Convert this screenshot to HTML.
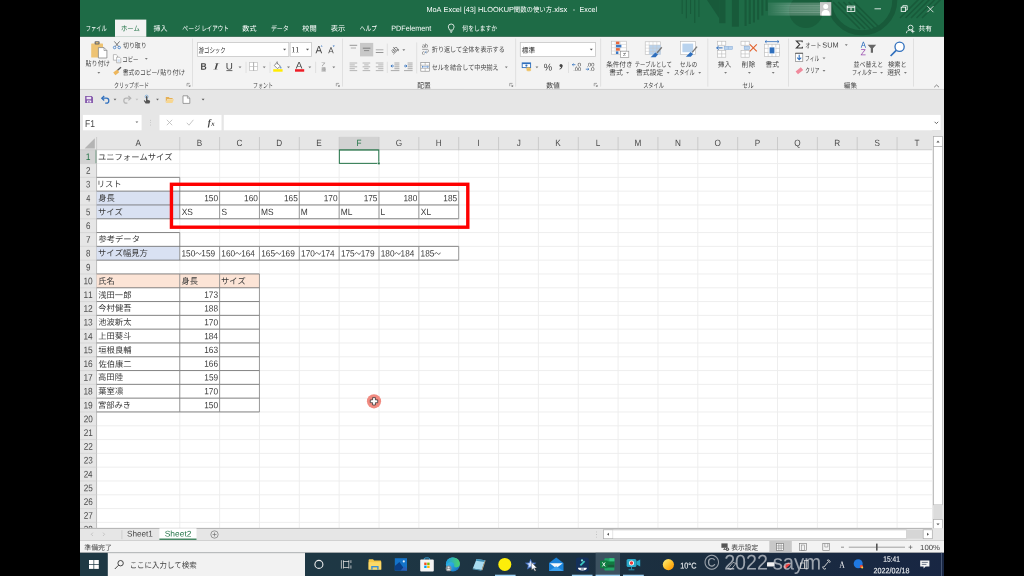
<!DOCTYPE html>
<html lang="ja"><head><meta charset="utf-8"><title>MoA Excel [43] HLOOKUP - Excel</title>
<style>
html,body{margin:0;padding:0;background:#000;}
body{width:1024px;height:576px;overflow:hidden;position:relative;font-family:"Liberation Sans","Noto Sans CJK JP",sans-serif;}
#app{position:absolute;left:0;top:0;width:1024px;height:576px;overflow:hidden;background:#000;}
#fx{position:absolute;left:80px;top:0;width:864px;height:576px;overflow:hidden;}
#fx>div{position:absolute;left:-80px;top:0;width:1024px;height:576px;filter:blur(0.3px);}
#art{position:absolute;left:0;top:0;will-change:transform;}
#art text{font-family:"Liberation Sans","Noto Sans CJK JP",sans-serif;text-rendering:geometricPrecision;font-kerning:none;white-space:pre;}
</style></head>
<body>
<div id="app"><div id="fx"><div>
<svg id="art" width="1024" height="576" viewBox="0 0 1024 576">
<rect x="80" y="0" width="864" height="36.8" fill="#1e6b46"/>
<g fill="#185a3a">
<rect x="681.6" y="0" width="1.1" height="14" fill="#185a3a"/>
<rect x="685.8" y="0" width="1.1" height="18.3" fill="#185a3a"/>
<rect x="690" y="0" width="1.1" height="14" fill="#185a3a"/>
<rect x="694.2" y="0" width="1.1" height="23" fill="#185a3a"/>
<rect x="698.4" y="0" width="1.1" height="17" fill="#185a3a"/>
<path d="M707 0L719.2 0L719.2 18.3Z" fill="#185a3a"/>
<rect x="719.2" y="0" width="6.3" height="23.2" fill="#185a3a"/>
<rect x="731.9" y="0" width="7" height="26.7" fill="#185a3a"/>
<rect x="744.5" y="0" width="2.1" height="26" fill="#185a3a"/>
<rect x="748.7" y="0" width="2.1" height="24" fill="#185a3a"/>
<rect x="752.9" y="0" width="2.1" height="22.5" fill="#185a3a"/>
<rect x="757.1" y="0" width="2.1" height="19.7" fill="#185a3a"/>
<rect x="761.3" y="0" width="2.1" height="15.5" fill="#185a3a"/>
<rect x="765.5" y="0" width="2.1" height="11" fill="#185a3a"/>
</g>
<circle cx="862" cy="0" r="32.8" fill="none" stroke="#185a3a" stroke-width="5"/>
<circle cx="806" cy="11" r="17" fill="#185a3a" opacity="0.75"/>
<g stroke="#185a3a" stroke-width="1.6" fill="none">
<path d="M833 2L860 29"/>
<path d="M838.2 2L865.2 29"/>
<path d="M843.4 2L870.4 29"/>
<path d="M848.6 2L875.6 29"/>
<path d="M853.8 2L880.8 29"/>
<path d="M900 18L920 -2"/>
<path d="M905.5 18L925.5 -2"/>
<path d="M911 18L931 -2"/>
<path d="M916.5 18L936.5 -2"/>
<path d="M922 18L942 -2"/>
</g>
<defs><linearGradient id="nm" x1="0" x2="1"><stop offset="0" stop-color="#fff" stop-opacity="0"/><stop offset="0.45" stop-color="#fff" stop-opacity="0.16"/><stop offset="1" stop-color="#fff" stop-opacity="0.2"/></linearGradient></defs>
<rect x="768" y="2.6" width="52" height="13" fill="#fff" opacity="0.07"/>
<rect x="768" y="2.6" width="52" height="13" fill="url(#nm)"/>
<rect x="770" y="5.2" width="50" height="1.1" fill="url(#nm)"/>
<rect x="770" y="7.4" width="50" height="1.1" fill="url(#nm)"/>
<rect x="770" y="9.6" width="50" height="1.1" fill="url(#nm)"/>
<rect x="770" y="11.8" width="50" height="1.1" fill="url(#nm)"/>
<rect x="820" y="2.1" width="11.3" height="13.5" fill="#c9c9c9"/>
<circle cx="825.7" cy="6.6" r="2.5" fill="#fff"/>
<path d="M821.5 15.6C821.5 11.6 823 10 825.7 10S829.9 11.6 829.9 15.6Z" fill="#fff"/>
<rect x="847.2" y="6.1" width="7.6" height="5.4" fill="none" stroke="#fff" stroke-width="0.8"/>
<path d="M847.2 7.6L854.8 7.6" stroke="#fff" stroke-width="0.8" fill="none"/>
<path d="M851 8.6L851 10.8M849.8 9.6L851 8.5L852.2 9.6" fill="none" stroke="#fff" stroke-width="0.7"/>
<path d="M874.5 8.8L881 8.8" stroke="#fff" stroke-width="0.8" fill="none"/>
<rect x="901.2" y="7.2" width="4.4" height="4.3" fill="none" stroke="#fff" stroke-width="0.8"/>
<path d="M902.8 7.2V5.7H907.2V10H905.6" fill="none" stroke="#fff" stroke-width="0.8"/>
<path d="M927.4 6.2L933.4 12.2M933.4 6.2L927.4 12.2" fill="none" stroke="#fff" stroke-width="0.8"/>
<text x="426.4" y="12.05" font-size="7.4" fill="#fff" textLength="87.59" lengthAdjust="spacingAndGlyphs" transform="rotate(0.05 426.4 12.05)">MoA Excel [43] HLOOKUP</text>
<text x="513.79" y="12.22" font-size="7" fill="#fff" textLength="38.36" lengthAdjust="spacingAndGlyphs">関数の使い方</text>
<text x="552.11" y="12.05" font-size="7.4" fill="#fff" textLength="15.17" lengthAdjust="spacingAndGlyphs" transform="rotate(0.05 552.11 12.05)">.xlsx</text>
<text x="572.87" y="12.05" font-size="7.4" fill="#fff" transform="rotate(0.05 572.87 12.05)">-</text>
<text x="579.61" y="12.05" font-size="7.4" fill="#fff" textLength="17.46" lengthAdjust="spacingAndGlyphs" transform="rotate(0.05 579.61 12.05)">Excel</text>
<rect x="115" y="19.6" width="31.3" height="17.2" fill="#f3f3f3"/>
<text x="85.63" y="30.8" font-size="7.2" fill="#fff" textLength="21.22" lengthAdjust="spacingAndGlyphs">ファイル</text>
<text x="120.89" y="30.8" font-size="7.2" fill="#217346" textLength="18.93" lengthAdjust="spacingAndGlyphs">ホーム</text>
<text x="153.61" y="30.8" font-size="7.2" fill="#fff" textLength="14.02" lengthAdjust="spacingAndGlyphs">挿入</text>
<text x="182.28" y="30.8" font-size="7.2" fill="#fff" textLength="17.96" lengthAdjust="spacingAndGlyphs">ページ</text>
<text x="201.39" y="30.8" font-size="7.2" fill="#fff" textLength="27.36" lengthAdjust="spacingAndGlyphs">レイアウト</text>
<text x="242.36" y="30.8" font-size="7.2" fill="#fff" textLength="14.07" lengthAdjust="spacingAndGlyphs">数式</text>
<text x="270.89" y="30.8" font-size="7.2" fill="#fff" textLength="17.86" lengthAdjust="spacingAndGlyphs">データ</text>
<text x="302.37" y="30.8" font-size="7.2" fill="#fff" textLength="14.44" lengthAdjust="spacingAndGlyphs">校閲</text>
<text x="330.7" y="30.8" font-size="7.2" fill="#fff" textLength="14.53" lengthAdjust="spacingAndGlyphs">表示</text>
<text x="359.84" y="30.8" font-size="7.2" fill="#fff" textLength="17.25" lengthAdjust="spacingAndGlyphs">ヘルプ</text>
<text x="391.31" y="30.65" font-size="7.4" fill="#fff" textLength="39.84" lengthAdjust="spacingAndGlyphs" transform="rotate(0.05 391.31 30.65)">PDFelement</text>
<path d="M451.2 24A2.9 2.9 0 0 1 454.1 26.9C454.1 28.3 453 28.8 452.8 30.1H449.6C449.4 28.8 448.3 28.3 448.3 26.9A2.9 2.9 0 0 1 451.2 24Z" fill="none" stroke="#fff" stroke-width="0.8"/>
<path d="M449.9 31.2L452.5 31.2" stroke="#fff" stroke-width="0.7" fill="none"/>
<path d="M450.4 32.3L452 32.3" stroke="#fff" stroke-width="0.7" fill="none"/>
<text x="462.35" y="30.8" font-size="7.2" fill="#fff" textLength="34.75" lengthAdjust="spacingAndGlyphs">何をしますか</text>
<circle cx="910.6" cy="27.6" r="2.4" fill="none" stroke="#fff" stroke-width="0.8"/>
<path d="M906.4 33.2C906.6 30.6 908.3 30 910.6 30C911.6 30 912.4 30.2 913 30.6" fill="none" stroke="#fff" stroke-width="0.8"/>
<path d="M912.8 29.8V33.2M911.1 31.5H914.5" fill="none" stroke="#fff" stroke-width="0.7"/>
<text x="918.58" y="30.73" font-size="7" fill="#fff" textLength="13.33" lengthAdjust="spacingAndGlyphs">共有</text>
<rect x="80" y="36.8" width="864" height="52.8" fill="#f3f3f3"/>
<path d="M80 89.4L944 89.4" stroke="#d8d8d8" stroke-width="0.8" fill="none"/>
<path d="M192.5 38.6L192.5 86.6" stroke="#dadada" stroke-width="0.8" fill="none"/>
<path d="M342.5 38.6L342.5 86.6" stroke="#dadada" stroke-width="0.8" fill="none"/>
<path d="M515.6 38.6L515.6 86.6" stroke="#dadada" stroke-width="0.8" fill="none"/>
<path d="M600.6 38.6L600.6 86.6" stroke="#dadada" stroke-width="0.8" fill="none"/>
<path d="M707.8 38.6L707.8 86.6" stroke="#dadada" stroke-width="0.8" fill="none"/>
<path d="M788.5 38.6L788.5 86.6" stroke="#dadada" stroke-width="0.8" fill="none"/>
<path d="M913.5 38.6L913.5 86.6" stroke="#dadada" stroke-width="0.8" fill="none"/>
<rect x="91.2" y="43.4" width="11.8" height="14.2" fill="#eec373" rx="0.6"/>
<rect x="94.6" y="41.3" width="5" height="3.3" fill="#6b6b6b" rx="0.8"/>
<rect x="95.8" y="42.2" width="2.6" height="1.2" fill="#eec373"/>
<path d="M98.4 47.6H104L106.9 50.5V58H98.4Z" fill="#fff" stroke="#7a7a7a" stroke-width="0.7"/>
<path d="M104 47.6V50.5H106.9" fill="none" stroke="#7a7a7a" stroke-width="0.6"/>
<text x="85.58" y="66.46" font-size="7.1" fill="#444" textLength="24.14" lengthAdjust="spacingAndGlyphs">貼り付け</text>
<path d="M97.35 71.95L100.25 71.95L98.8 73.65Z" fill="#7a7a7a"/>
<path d="M114.3 41.4L118.6 46.4M119.6 41.4L115.3 46.4" fill="none" stroke="#555" stroke-width="0.8"/>
<circle cx="114.6" cy="47.5" r="1.25" fill="none" stroke="#3b78c4" stroke-width="0.8"/>
<circle cx="119.2" cy="47.5" r="1.25" fill="none" stroke="#3b78c4" stroke-width="0.8"/>
<text x="123.01" y="48.06" font-size="7.1" fill="#444" textLength="23.59" lengthAdjust="spacingAndGlyphs">切り取り</text>
<path d="M113.4 54.6H116.2L117.5 55.9V60.2H113.4Z" fill="#fff" stroke="#8a8a8a" stroke-width="0.55"/>
<path d="M116.6 57.2H119.4L120.8 58.6V62.8H116.6Z" fill="#fff" stroke="#8a8a8a" stroke-width="0.55"/>
<path d="M117.6 60L119.8 60" stroke="#6f9fd8" stroke-width="0.45" fill="none"/>
<path d="M117.6 61.2L119.8 61.2" stroke="#6f9fd8" stroke-width="0.45" fill="none"/>
<text x="122.35" y="61.56" font-size="7.1" fill="#444" textLength="16.11" lengthAdjust="spacingAndGlyphs">コピー</text>
<path d="M144.85 58.05L147.75 58.05L146.3 59.75Z" fill="#7a7a7a"/>
<path d="M113.2 72.4L117.2 69.4L119.2 72.2L115.4 75.2Z" fill="#eeb75c"/>
<path d="M117.6 70.2L121 67.2" fill="none" stroke="#555" stroke-width="1.3"/>
<text x="122.84" y="74.96" font-size="7.1" fill="#444" textLength="34.4" lengthAdjust="spacingAndGlyphs">書式のコピー</text>
<text x="157.2" y="74.85" font-size="7.4" fill="#444" transform="rotate(0.05 157.2 74.85)">/</text>
<text x="160.17" y="74.96" font-size="7.1" fill="#444" textLength="24.86" lengthAdjust="spacingAndGlyphs">貼り付け</text>
<text x="114.11" y="87.86" font-size="7.1" fill="#444" textLength="34.93" lengthAdjust="spacingAndGlyphs">クリップボード</text>
<path d="M187 86.2V83.4H189.8" fill="none" stroke="#777" stroke-width="0.6"/>
<path d="M190.4 84.8L190.4 86.8L188.4 86.8Z" fill="#777"/>
<path d="M188.4 84.8L189.8 86.2" stroke="#777" stroke-width="0.6" fill="none"/>
<rect x="197.6" y="42.6" width="91.2" height="13.8" fill="#fff" stroke="#c6c6c6" stroke-width="0.8"/>
<rect x="290.1" y="42.6" width="21.4" height="13.8" fill="#fff" stroke="#c6c6c6" stroke-width="0.8"/>
<text x="198.56" y="52.57" font-size="7.4" fill="#333" textLength="27.11" lengthAdjust="spacingAndGlyphs">游ゴシック</text>
<path d="M283.1 48.7L286.1 48.7L284.6 50.5Z" fill="#555"/>
<text x="291.29" y="52.32" font-size="8" fill="#333" textLength="8.1" lengthAdjust="spacingAndGlyphs" style="font-family:'Liberation Serif',serif" transform="rotate(0.05 291.29 52.32)">11</text>
<path d="M306 48.7L309 48.7L307.5 50.5Z" fill="#555"/>
<text x="315.38" y="53.15" font-size="10.6" fill="#444" textLength="6.64" lengthAdjust="spacingAndGlyphs" transform="rotate(0.05 315.38 53.15)">A</text>
<path d="M320.6 46.6L322.6 46.6L321.6 45.2Z" fill="#3b78c4"/>
<text x="328.18" y="53.36" font-size="8.6" fill="#444" textLength="5.43" lengthAdjust="spacingAndGlyphs" transform="rotate(0.05 328.18 53.36)">A</text>
<path d="M332.6 45.6L334.8 45.6L333.7 47Z" fill="#3b78c4"/>
<text x="200.43" y="69.7" font-size="9.6" fill="#444" textLength="6.16" lengthAdjust="spacingAndGlyphs" font-weight="bold" transform="rotate(0.05 200.43 69.7)">B</text>
<text x="213.39" y="69.54" font-size="9.6" fill="#444" textLength="5.6" lengthAdjust="spacingAndGlyphs" style="font-family:'Liberation Serif',serif" font-style="italic" transform="rotate(0.05 213.39 69.54)">I</text>
<text x="225.84" y="69.43" font-size="9.4" fill="#444" textLength="7.12" lengthAdjust="spacingAndGlyphs" transform="rotate(0.05 225.84 69.43)">U</text>
<path d="M226.4 70.6L232.4 70.6" stroke="#444" stroke-width="0.8" fill="none"/>
<path d="M238.55 66.55L241.45 66.55L240 68.25Z" fill="#7a7a7a"/>
<path d="M246 61.8L246 73" stroke="#dadada" stroke-width="0.8" fill="none"/>
<rect x="249.6" y="62.4" width="8" height="8.2" fill="#fff" stroke="#c2c2c2" stroke-width="0.7"/>
<path d="M253.6 62.4L253.6 70.6" stroke="#8a8a8a" stroke-width="0.7" fill="none"/>
<path d="M249.6 66.5L257.6 66.5" stroke="#b5b5b5" stroke-width="0.6" fill="none"/>
<path d="M262.75 66.55L265.65 66.55L264.2 68.25Z" fill="#7a7a7a"/>
<path d="M270 61.8L270 73" stroke="#dadada" stroke-width="0.8" fill="none"/>
<path d="M276.6 62.6L280.4 66.2L277.4 68.6L274.4 65.6Z" fill="#fff" stroke="#666" stroke-width="0.7"/>
<path d="M277.2 61.4V64.4" fill="none" stroke="#666" stroke-width="0.7"/>
<path d="M280.6 66.2C281.6 67.4 281.7 68.4 281 68.6C280.2 68.6 280.1 67.4 280.6 66.2Z" fill="#3b78c4"/>
<rect x="273.2" y="69.2" width="9.4" height="2.5" fill="#ffeb00"/>
<path d="M287.05 66.55L289.95 66.55L288.5 68.25Z" fill="#7a7a7a"/>
<text x="295.88" y="68.43" font-size="9.4" fill="#444" textLength="6.64" lengthAdjust="spacingAndGlyphs" transform="rotate(0.05 295.88 68.43)">A</text>
<rect x="295" y="69.2" width="9.2" height="2.5" fill="#ee1c25"/>
<path d="M308.35 66.55L311.25 66.55L309.8 68.25Z" fill="#7a7a7a"/>
<path d="M315.6 61.8L315.6 73" stroke="#dadada" stroke-width="0.8" fill="none"/>
<text x="321.03" y="66.12" font-size="4.6" fill="#666" textLength="4.6" lengthAdjust="spacingAndGlyphs">ア</text>
<text x="321.17" y="71.1" font-size="4.8" fill="#666" textLength="4.8" lengthAdjust="spacingAndGlyphs">亜</text>
<path d="M332.35 66.55L335.25 66.55L333.8 68.25Z" fill="#7a7a7a"/>
<text x="252.98" y="87.86" font-size="7.1" fill="#444" textLength="19.88" lengthAdjust="spacingAndGlyphs">フォント</text>
<path d="M336.3 86.2V83.4H339.1" fill="none" stroke="#777" stroke-width="0.6"/>
<path d="M339.7 84.8L339.7 86.8L337.7 86.8Z" fill="#777"/>
<path d="M337.7 84.8L339.1 86.2" stroke="#777" stroke-width="0.6" fill="none"/>
<rect x="360" y="42.9" width="13.2" height="13.5" fill="#c8c8c8"/>
<path d="M349.6 45.3L357.2 45.3" stroke="#777" stroke-width="0.75" fill="none"/>
<path d="M350.8 48L356 48" stroke="#999" stroke-width="0.75" fill="none"/>
<path d="M362.8 48.2L370.4 48.2" stroke="#666" stroke-width="0.75" fill="none"/>
<path d="M364 50.6L369.2 50.6" stroke="#777" stroke-width="0.75" fill="none"/>
<path d="M375.8 49.8L383.4 49.8" stroke="#999" stroke-width="0.75" fill="none"/>
<path d="M375.8 52.5L383.4 52.5" stroke="#777" stroke-width="0.75" fill="none"/>
<path d="M387.3 43.6L387.3 55.6" stroke="#dadada" stroke-width="0.8" fill="none"/>
<g transform="rotate(-40 394.6 49.6)">
<text x="390.85" y="51.6" font-size="6.4" fill="#555" textLength="7" lengthAdjust="spacingAndGlyphs">ab</text>
</g>
<path d="M393.2 54.4L398.6 49.4M398.6 49.4L396.8 49.6M398.6 49.4L398.4 51.2" fill="none" stroke="#777" stroke-width="0.7"/>
<path d="M402.35 49.35L405.25 49.35L403.8 51.05Z" fill="#7a7a7a"/>
<path d="M416.7 42.4L416.7 73.4" stroke="#dadada" stroke-width="0.8" fill="none"/>
<path d="M349.6 63L357.2 63" stroke="#949494" stroke-width="0.65" fill="none"/>
<path d="M349.6 64.9L354.8 64.9" stroke="#949494" stroke-width="0.65" fill="none"/>
<path d="M349.6 66.8L357.2 66.8" stroke="#949494" stroke-width="0.65" fill="none"/>
<path d="M349.6 68.7L354.8 68.7" stroke="#949494" stroke-width="0.65" fill="none"/>
<path d="M349.6 70.6L357.2 70.6" stroke="#949494" stroke-width="0.65" fill="none"/>
<path d="M362.6 63L370.2 63" stroke="#949494" stroke-width="0.65" fill="none"/>
<path d="M364.2 64.9L368.6 64.9" stroke="#949494" stroke-width="0.65" fill="none"/>
<path d="M362.6 66.8L370.2 66.8" stroke="#949494" stroke-width="0.65" fill="none"/>
<path d="M364.2 68.7L368.6 68.7" stroke="#949494" stroke-width="0.65" fill="none"/>
<path d="M362.6 70.6L370.2 70.6" stroke="#949494" stroke-width="0.65" fill="none"/>
<path d="M375.8 63L383.4 63" stroke="#949494" stroke-width="0.65" fill="none"/>
<path d="M378.2 64.9L383.4 64.9" stroke="#949494" stroke-width="0.65" fill="none"/>
<path d="M375.8 66.8L383.4 66.8" stroke="#949494" stroke-width="0.65" fill="none"/>
<path d="M378.2 68.7L383.4 68.7" stroke="#949494" stroke-width="0.65" fill="none"/>
<path d="M375.8 70.6L383.4 70.6" stroke="#949494" stroke-width="0.65" fill="none"/>
<path d="M387.3 61.8L387.3 73" stroke="#dadada" stroke-width="0.8" fill="none"/>
<path d="M394.4 63L399.4 63" stroke="#8a8a8a" stroke-width="0.7" fill="none"/>
<path d="M394.4 64.9L399.4 64.9" stroke="#8a8a8a" stroke-width="0.7" fill="none"/>
<path d="M394.4 66.8L399.4 66.8" stroke="#8a8a8a" stroke-width="0.7" fill="none"/>
<path d="M394.4 68.7L399.4 68.7" stroke="#8a8a8a" stroke-width="0.7" fill="none"/>
<path d="M390.8 70.6L399.4 70.6" stroke="#8a8a8a" stroke-width="0.7" fill="none"/>
<path d="M393.8 66H391M392.2 64.7L390.9 66L392.2 67.3" fill="none" stroke="#2f6fbd" stroke-width="0.9"/>
<path d="M407.6 63L412.6 63" stroke="#8a8a8a" stroke-width="0.7" fill="none"/>
<path d="M407.6 64.9L412.6 64.9" stroke="#8a8a8a" stroke-width="0.7" fill="none"/>
<path d="M407.6 66.8L412.6 66.8" stroke="#8a8a8a" stroke-width="0.7" fill="none"/>
<path d="M407.6 68.7L412.6 68.7" stroke="#8a8a8a" stroke-width="0.7" fill="none"/>
<path d="M404 70.6L412.6 70.6" stroke="#8a8a8a" stroke-width="0.7" fill="none"/>
<path d="M404 66H406.8M405.6 64.7L406.9 66L405.6 67.3" fill="none" stroke="#2f6fbd" stroke-width="0.9"/>
<text x="421.97" y="47.53" font-size="5.6" fill="#555" textLength="6.06" lengthAdjust="spacingAndGlyphs" transform="rotate(0.05 421.97 47.53)">ab</text>
<path d="M422.2 49.4H427.4C428.8 49.4 428.8 52.2 427.4 52.2H425.6" fill="none" stroke="#777" stroke-width="0.65"/>
<path d="M426.4 51.2L425.3 52.2L426.4 53.2" fill="none" stroke="#2f6fbd" stroke-width="0.7"/>
<text x="421.96" y="54.53" font-size="5.6" fill="#555" transform="rotate(0.05 421.96 54.53)">c</text>
<text x="431.81" y="52.46" font-size="7.1" fill="#444" textLength="72.97" lengthAdjust="spacingAndGlyphs">折り返して全体を表示する</text>
<rect x="420.8" y="62.4" width="8.8" height="8.8" fill="#fff" stroke="#8a8a8a" stroke-width="0.65"/>
<path d="M420.8 65.2L429.6 65.2" stroke="#8a8a8a" stroke-width="0.5" fill="none"/>
<path d="M420.8 68.4L429.6 68.4" stroke="#8a8a8a" stroke-width="0.5" fill="none"/>
<path d="M425.2 62.4L425.2 65.2" stroke="#8a8a8a" stroke-width="0.5" fill="none"/>
<path d="M425.2 68.4L425.2 71.2" stroke="#8a8a8a" stroke-width="0.5" fill="none"/>
<path d="M422 66.8H428.4M423 66L422 66.8L423 67.6M427.4 66L428.4 66.8L427.4 67.6" fill="none" stroke="#2f6fbd" stroke-width="0.6"/>
<text x="431.67" y="69.96" font-size="7.1" fill="#444" textLength="67.04" lengthAdjust="spacingAndGlyphs">セルを結合して中央揃え</text>
<path d="M504.85 66.55L507.75 66.55L506.3 68.25Z" fill="#7a7a7a"/>
<text x="417.32" y="87.86" font-size="7.1" fill="#444" textLength="13.46" lengthAdjust="spacingAndGlyphs">配置</text>
<path d="M509.7 86.2V83.4H512.5" fill="none" stroke="#777" stroke-width="0.6"/>
<path d="M513.1 84.8L513.1 86.8L511.1 86.8Z" fill="#777"/>
<path d="M511.1 84.8L512.5 86.2" stroke="#777" stroke-width="0.6" fill="none"/>
<rect x="520.3" y="42.6" width="75.3" height="13.8" fill="#fff" stroke="#c6c6c6" stroke-width="0.8"/>
<text x="521.79" y="52.57" font-size="7.4" fill="#333" textLength="13.44" lengthAdjust="spacingAndGlyphs">標準</text>
<path d="M589.8 48.7L592.8 48.7L591.3 50.5Z" fill="#555"/>
<rect x="522.2" y="62.9" width="8.4" height="4.7" fill="#fff" stroke="#2f6fbd" stroke-width="0.9"/>
<rect x="522.2" y="62.9" width="8.4" height="1.2" fill="#2f6fbd"/>
<circle cx="526.4" cy="65.6" r="1.1" fill="#2f6fbd"/>
<path d="M526.2 68.4A2.2 1 0 0 0 530.6 68.4A2.2 1 0 0 0 526.2 68.4M526.6 70A2.2 1 0 0 0 531 70A2.2 1 0 0 0 526.6 70" fill="#f5cf7a" stroke="#e0a840" stroke-width="0.4"/>
<path d="M535.45 66.55L538.35 66.55L536.9 68.25Z" fill="#7a7a7a"/>
<text x="543.76" y="70.47" font-size="9.8" fill="#444" textLength="8.37" lengthAdjust="spacingAndGlyphs" transform="rotate(0.05 543.76 70.47)">%</text>
<circle cx="561" cy="65.4" r="1.5" fill="#444"/>
<path d="M562.5 65.2C562.7 67.4 561.6 68.8 559.6 69.6L559.3 69C560.6 68.3 561.2 67.4 561 66.4Z" fill="#444"/>
<path d="M568.5 61.8L568.5 73" stroke="#dadada" stroke-width="0.8" fill="none"/>
<path d="M572.4 64.7H575.4M573.5 63.6L572.3 64.7L573.5 65.8" fill="none" stroke="#2f6fbd" stroke-width="0.8"/>
<text x="575.82" y="66.62" font-size="5.3" fill="#444" textLength="5.33" lengthAdjust="spacingAndGlyphs" transform="rotate(0.05 575.82 66.62)">.0</text>
<text x="573.18" y="71.12" font-size="5.3" fill="#444" textLength="7.95" lengthAdjust="spacingAndGlyphs" transform="rotate(0.05 573.18 71.12)">.00</text>
<text x="586.48" y="66.62" font-size="5.3" fill="#444" textLength="7.95" lengthAdjust="spacingAndGlyphs" transform="rotate(0.05 586.48 66.62)">.00</text>
<path d="M585.8 69.2H588.8M587.7 68.1L588.9 69.2L587.7 70.3" fill="none" stroke="#2f6fbd" stroke-width="0.8"/>
<text x="589.32" y="71.12" font-size="5.3" fill="#444" textLength="5.33" lengthAdjust="spacingAndGlyphs" transform="rotate(0.05 589.32 71.12)">.0</text>
<text x="546.17" y="87.86" font-size="7.1" fill="#444" textLength="13.71" lengthAdjust="spacingAndGlyphs">数値</text>
<path d="M594.2 86.2V83.4H597" fill="none" stroke="#777" stroke-width="0.6"/>
<path d="M597.6 84.8L597.6 86.8L595.6 86.8Z" fill="#777"/>
<path d="M595.6 84.8L597 86.2" stroke="#777" stroke-width="0.6" fill="none"/>
<rect x="611.4" y="41.2" width="15" height="13" fill="#fff" stroke="#b8b8b8" stroke-width="0.6"/>
<path d="M611.4 44.4L626.4 44.4" stroke="#c4c4c4" stroke-width="0.5" fill="none"/>
<path d="M611.4 47.7L626.4 47.7" stroke="#c4c4c4" stroke-width="0.5" fill="none"/>
<path d="M611.4 51L626.4 51" stroke="#c4c4c4" stroke-width="0.5" fill="none"/>
<path d="M615.2 41.2L615.2 54.2" stroke="#c4c4c4" stroke-width="0.5" fill="none"/>
<path d="M620.2 41.2L620.2 54.2" stroke="#c4c4c4" stroke-width="0.5" fill="none"/>
<rect x="616" y="41.6" width="3.4" height="2.6" fill="#e8683c"/>
<rect x="616" y="44.8" width="5.4" height="2.6" fill="#3b78c4"/>
<rect x="616" y="48.1" width="3.8" height="2.6" fill="#e8683c"/>
<rect x="616" y="51.4" width="2.4" height="2.6" fill="#3b78c4"/>
<rect x="620.6" y="51.2" width="8.2" height="6.2" fill="#fff" stroke="#8a8a8a" stroke-width="0.6"/>
<text x="623.03" y="56.16" font-size="5.4" fill="#444" transform="rotate(0.05 623.03 56.16)">≠</text>
<text x="606.14" y="66.86" font-size="7.1" fill="#444" textLength="26.46" lengthAdjust="spacingAndGlyphs">条件付き</text>
<text x="609.23" y="75.16" font-size="7.1" fill="#444" textLength="13.6" lengthAdjust="spacingAndGlyphs">書式</text>
<path d="M626.15 71.95L629.05 71.95L627.6 73.65Z" fill="#7a7a7a"/>
<rect x="645.2" y="41.8" width="15.4" height="12.8" fill="#fff" stroke="#b8b8b8" stroke-width="0.6"/>
<rect x="649.2" y="45" width="11.4" height="9.6" fill="#b9d3ee"/>
<path d="M645.2 45L660.6 45" stroke="#c4c4c4" stroke-width="0.5" fill="none"/>
<path d="M645.2 48.2L660.6 48.2" stroke="#c4c4c4" stroke-width="0.5" fill="none"/>
<path d="M645.2 51.4L660.6 51.4" stroke="#c4c4c4" stroke-width="0.5" fill="none"/>
<path d="M649.2 41.8L649.2 54.6" stroke="#c4c4c4" stroke-width="0.5" fill="none"/>
<path d="M653 41.8L653 54.6" stroke="#c4c4c4" stroke-width="0.5" fill="none"/>
<path d="M656.8 41.8L656.8 54.6" stroke="#c4c4c4" stroke-width="0.5" fill="none"/>
<path d="M657 53L661.8 47.2" fill="none" stroke="#787878" stroke-width="1.4"/>
<path d="M655.4 52.6L658 54.6L655.6 57.2H650.6Z" fill="#2f6fbd"/>
<text x="634.7" y="66.86" font-size="7.1" fill="#444" textLength="37.13" lengthAdjust="spacingAndGlyphs">テーブルとして</text>
<text x="636.03" y="75.16" font-size="7.1" fill="#444" textLength="27.26" lengthAdjust="spacingAndGlyphs">書式設定</text>
<path d="M666.75 71.95L669.65 71.95L668.2 73.65Z" fill="#7a7a7a"/>
<rect x="680.4" y="41.4" width="15" height="13" fill="#fff" stroke="#b8b8b8" stroke-width="0.6"/>
<rect x="682.4" y="43.6" width="10.8" height="8.6" fill="#b9d3ee"/>
<path d="M692.2 52.4L697 46.6" fill="none" stroke="#787878" stroke-width="1.4"/>
<path d="M690.6 52L693.2 54L690.8 56.8H685.8Z" fill="#2f6fbd"/>
<text x="679.85" y="66.86" font-size="7.1" fill="#444" textLength="17.49" lengthAdjust="spacingAndGlyphs">セルの</text>
<text x="674.09" y="75.16" font-size="7.1" fill="#444" textLength="20.56" lengthAdjust="spacingAndGlyphs">スタイル</text>
<path d="M698.25 71.95L701.15 71.95L699.7 73.65Z" fill="#7a7a7a"/>
<text x="643.18" y="87.86" font-size="7.1" fill="#444" textLength="20.77" lengthAdjust="spacingAndGlyphs">スタイル</text>
<rect x="717.6" y="41.2" width="8.2" height="4" fill="#fff" stroke="#b0b0b0" stroke-width="0.55"/>
<path d="M721.7 41.2L721.7 45.2" stroke="#b0b0b0" stroke-width="0.5" fill="none"/>
<rect x="717.6" y="50.6" width="8.2" height="6.6" fill="#fff" stroke="#b0b0b0" stroke-width="0.55"/>
<path d="M721.7 50.6L721.7 57.2" stroke="#b0b0b0" stroke-width="0.5" fill="none"/>
<path d="M717.6 53.9L725.8 53.9" stroke="#b0b0b0" stroke-width="0.5" fill="none"/>
<rect x="724.2" y="46.4" width="8.2" height="3" fill="#b9d3ee" stroke="#7fa6d6" stroke-width="0.5"/>
<path d="M728.3 46.4L728.3 49.4" stroke="#7fa6d6" stroke-width="0.5" fill="none"/>
<path d="M722.6 47.9H716.8M718.6 46.2L716.6 47.9L718.6 49.6" fill="none" stroke="#2f6fbd" stroke-width="1"/>
<text x="717.72" y="66.86" font-size="7.1" fill="#444" textLength="13.4" lengthAdjust="spacingAndGlyphs">挿入</text>
<path d="M724.15 71.95L727.05 71.95L725.6 73.65Z" fill="#7a7a7a"/>
<rect x="741" y="41.2" width="8.2" height="4" fill="#fff" stroke="#b0b0b0" stroke-width="0.55"/>
<path d="M745.1 41.2L745.1 45.2" stroke="#b0b0b0" stroke-width="0.5" fill="none"/>
<rect x="741" y="50.6" width="8.2" height="6.6" fill="#fff" stroke="#b0b0b0" stroke-width="0.55"/>
<path d="M745.1 50.6L745.1 57.2" stroke="#b0b0b0" stroke-width="0.5" fill="none"/>
<path d="M741 53.9L749.2 53.9" stroke="#b0b0b0" stroke-width="0.5" fill="none"/>
<rect x="744.2" y="46.4" width="5.2" height="3" fill="#b9d3ee" stroke="#7fa6d6" stroke-width="0.5"/>
<path d="M749.8 44.4L756.8 51.4M756.8 44.4L749.8 51.4" fill="none" stroke="#e2622e" stroke-width="1.15"/>
<text x="741.6" y="66.86" font-size="7.1" fill="#444" textLength="13.59" lengthAdjust="spacingAndGlyphs">削除</text>
<path d="M747.95 71.95L750.85 71.95L749.4 73.65Z" fill="#7a7a7a"/>
<rect x="764.4" y="44.2" width="15.2" height="12.4" fill="#fff" stroke="#b0b0b0" stroke-width="0.55"/>
<path d="M768.2 44.2L768.2 56.6" stroke="#b0b0b0" stroke-width="0.5" fill="none"/>
<path d="M772 44.2L772 56.6" stroke="#b0b0b0" stroke-width="0.5" fill="none"/>
<path d="M775.8 44.2L775.8 56.6" stroke="#b0b0b0" stroke-width="0.5" fill="none"/>
<path d="M764.4 48.33L779.6 48.33" stroke="#b0b0b0" stroke-width="0.5" fill="none"/>
<path d="M764.4 52.47L779.6 52.47" stroke="#b0b0b0" stroke-width="0.5" fill="none"/>
<rect x="768.6" y="47" width="6.8" height="7" fill="#fff"/>
<rect x="769.6" y="47.4" width="4.8" height="6" fill="#2f6fbd"/>
<path d="M765 41.6H779M766.6 40.4L765 41.6L766.6 42.8M777.4 40.4L779 41.6L777.4 42.8" fill="none" stroke="#2f6fbd" stroke-width="0.8"/>
<text x="765.43" y="66.86" font-size="7.1" fill="#444" textLength="13.6" lengthAdjust="spacingAndGlyphs">書式</text>
<path d="M771.75 71.95L774.65 71.95L773.2 73.65Z" fill="#7a7a7a"/>
<text x="742.26" y="87.86" font-size="7.1" fill="#444" textLength="11.42" lengthAdjust="spacingAndGlyphs">セル</text>
<path d="M802.2 42.3V41H796.4L799.7 44.5L796.4 48H802.4V46.7" fill="none" stroke="#3c3c3c" stroke-width="1.1"/>
<text x="805.35" y="47.76" font-size="7.1" fill="#444" textLength="15.86" lengthAdjust="spacingAndGlyphs">オート</text>
<text x="822.27" y="47.61" font-size="7.3" fill="#444" textLength="16.34" lengthAdjust="spacingAndGlyphs" transform="rotate(0.05 822.27 47.61)">SUM</text>
<path d="M844.85 44.35L847.75 44.35L846.3 46.05Z" fill="#7a7a7a"/>
<rect x="795.6" y="53.6" width="7.2" height="7.8" fill="#fff" stroke="#777" stroke-width="0.6"/>
<path d="M795.4 53.2L803 53.2" stroke="#555" stroke-width="0.9" fill="none"/>
<path d="M799.2 54.8V59.4M797.2 57.6L799.2 59.8L801.2 57.6" fill="none" stroke="#2f6fbd" stroke-width="1.1"/>
<text x="805.12" y="60.96" font-size="7.1" fill="#444" textLength="14.11" lengthAdjust="spacingAndGlyphs">フィル</text>
<path d="M822.55 57.55L825.45 57.55L824 59.25Z" fill="#7a7a7a"/>
<path d="M795.6 71.4L800.8 67.2L803.2 70L798 74.2Z" fill="#f08a9c"/>
<text x="805.34" y="73.46" font-size="7.1" fill="#444" textLength="13.98" lengthAdjust="spacingAndGlyphs">クリア</text>
<path d="M822.55 70.05L825.45 70.05L824 71.75Z" fill="#7a7a7a"/>
<text x="860.78" y="47.76" font-size="8.6" fill="#2f6fbd" textLength="5.23" lengthAdjust="spacingAndGlyphs" transform="rotate(0.05 860.78 47.76)">A</text>
<text x="860.62" y="55.16" font-size="8.6" fill="#9a4fb0" textLength="5.35" lengthAdjust="spacingAndGlyphs" transform="rotate(0.05 860.62 55.16)">Z</text>
<path d="M867.6 44.8L876.2 44.8L873 48.2L873 52.8L870.8 52.8L870.8 48.2Z" fill="#666"/>
<text x="853.54" y="66.86" font-size="7.1" fill="#444" textLength="29.62" lengthAdjust="spacingAndGlyphs">並べ替えと</text>
<text x="851.97" y="75.16" font-size="7.1" fill="#444" textLength="25.26" lengthAdjust="spacingAndGlyphs">フィルター</text>
<path d="M880.15 71.95L883.05 71.95L881.6 73.65Z" fill="#7a7a7a"/>
<circle cx="899.6" cy="46.8" r="4.6" fill="#fff" stroke="#2f6fbd" stroke-width="1.3"/>
<path d="M896.2 50.4L890.6 56" fill="none" stroke="#2f6fbd" stroke-width="1.7"/>
<text x="888.1" y="66.86" font-size="7.1" fill="#444" textLength="18.66" lengthAdjust="spacingAndGlyphs">検索と</text>
<text x="887.17" y="75.16" font-size="7.1" fill="#444" textLength="13.38" lengthAdjust="spacingAndGlyphs">選択</text>
<path d="M903.95 71.95L906.85 71.95L905.4 73.65Z" fill="#7a7a7a"/>
<text x="843.83" y="87.86" font-size="7.1" fill="#444" textLength="13.18" lengthAdjust="spacingAndGlyphs">編集</text>
<path d="M934.2 87.2L936.6 85L939 87.2" fill="none" stroke="#666" stroke-width="0.8"/>
<rect x="80" y="89.6" width="864" height="60.6" fill="#e6e6e6"/>
<path d="M85.2 96H91.6L92.9 97.3V103H85.2Z" fill="#7d4ea6"/>
<rect x="86.5" y="96.8" width="4.7" height="2.5" fill="#ece3f3"/>
<rect x="86.9" y="100.5" width="4.4" height="2" fill="#f6f1fa"/>
<rect x="88.3" y="101.1" width="1.2" height="1.4" fill="#7d4ea6"/>
<path d="M102.4 98.2H106.4C109.6 98.2 109.6 103.2 106.4 103.2H105.2" fill="none" stroke="#2f6fbd" stroke-width="1.3"/>
<path d="M104.2 96L101.8 98.2L104.2 100.4" fill="none" stroke="#2f6fbd" stroke-width="1.3"/>
<path d="M113.6 98.8L116.4 98.8L115 100.4Z" fill="#666"/>
<path d="M130.2 98.2H126.2C123 98.2 123 103.2 126.2 103.2H127.4" fill="none" stroke="#b4b4b4" stroke-width="1.2"/>
<path d="M128.4 96L130.8 98.2L128.4 100.4" fill="none" stroke="#b4b4b4" stroke-width="1.2"/>
<path d="M135.5 98.8L138.3 98.8L136.9 100.4Z" fill="#c0c0c0"/>
<circle cx="146.6" cy="96.6" r="1.5" fill="none" stroke="#5b9bd5" stroke-width="0.6"/>
<path d="M146 96.8C146 95.8 147.4 95.8 147.4 96.8V99.8L149.6 100.4C150.2 100.6 150.2 101.2 150 102L149.4 103.6H145.6L143.9 101C143.6 100.4 144.4 100 144.9 100.5L146 101.6Z" fill="#555"/>
<path d="M156.1 98.8L158.9 98.8L157.5 100.4Z" fill="#666"/>
<path d="M165.8 97H168.8L169.6 97.9H172.6V99H167.4L165.8 102.6Z" fill="#e6b055"/>
<path d="M167.6 99.2H174L172.4 102.9H165.8Z" fill="#f7d690"/>
<path d="M183 95.8H187.4L189.8 98.2V103.4H183Z" fill="#fff" stroke="#777" stroke-width="0.7"/>
<path d="M187.4 95.8V98.2H189.8" fill="none" stroke="#777" stroke-width="0.6"/>
<path d="M201.7 98.8L204.5 98.8L203.1 100.4Z" fill="#555"/>
<rect x="82.9" y="114.9" width="58.7" height="15.4" fill="#fff"/>
<text x="85.1" y="126.97" font-size="9.8" fill="#444" textLength="9.91" lengthAdjust="spacingAndGlyphs" transform="rotate(0.05 85.1 126.97)">F1</text>
<path d="M135.5 121.4L138.3 121.4L136.9 123Z" fill="#666"/>
<circle cx="150.4" cy="120.2" r="0.45" fill="#a8a8a8"/>
<circle cx="150.4" cy="122.6" r="0.45" fill="#a8a8a8"/>
<circle cx="150.4" cy="125" r="0.45" fill="#a8a8a8"/>
<rect x="159.5" y="114.9" width="62" height="15.4" fill="#fff"/>
<path d="M166.8 119.8L172.2 125.2M172.2 119.8L166.8 125.2" fill="none" stroke="#b8b8b8" stroke-width="0.8"/>
<path d="M186.8 122.8L189 125.2L193.4 119.8" fill="none" stroke="#b8b8b8" stroke-width="0.8"/>
<text x="207.73" y="125.61" font-size="9.2" fill="#444" style="font-family:'Liberation Serif',serif" font-weight="bold" font-style="italic" transform="rotate(0.05 207.73 125.61)">f</text>
<text x="211.37" y="125.82" font-size="6.8" fill="#444" style="font-family:'Liberation Serif',serif" font-weight="bold" font-style="italic" transform="rotate(0.05 211.37 125.82)">x</text>
<rect x="223.8" y="114.9" width="716.8" height="15.4" fill="#fff"/>
<path d="M934.6 121.8L936.4 123.6L938.2 121.8" fill="none" stroke="#555" stroke-width="0.9"/>
<rect x="931.9" y="130" width="12.1" height="399.3" fill="#e6e6e6"/>
<clipPath id="gc"><rect x="80" y="130" width="852.4" height="398.3"/></clipPath><g clip-path="url(#gc)">
<rect x="80" y="149.75" width="16.6" height="378.55" fill="#e6e6e6"/>
<rect x="96.6" y="149.75" width="835.8" height="378.55" fill="#fff"/>
<path d="M179.75 149.75L179.75 528.3" stroke="#ececec" stroke-width="0.9" fill="none"/>
<path d="M219.6 149.75L219.6 528.3" stroke="#ececec" stroke-width="0.9" fill="none"/>
<path d="M259.45 149.75L259.45 528.3" stroke="#ececec" stroke-width="0.9" fill="none"/>
<path d="M299.3 149.75L299.3 528.3" stroke="#ececec" stroke-width="0.9" fill="none"/>
<path d="M339.15 149.75L339.15 528.3" stroke="#ececec" stroke-width="0.9" fill="none"/>
<path d="M379 149.75L379 528.3" stroke="#ececec" stroke-width="0.9" fill="none"/>
<path d="M418.85 149.75L418.85 528.3" stroke="#ececec" stroke-width="0.9" fill="none"/>
<path d="M458.7 149.75L458.7 528.3" stroke="#ececec" stroke-width="0.9" fill="none"/>
<path d="M498.55 149.75L498.55 528.3" stroke="#ececec" stroke-width="0.9" fill="none"/>
<path d="M538.4 149.75L538.4 528.3" stroke="#ececec" stroke-width="0.9" fill="none"/>
<path d="M578.25 149.75L578.25 528.3" stroke="#ececec" stroke-width="0.9" fill="none"/>
<path d="M618.1 149.75L618.1 528.3" stroke="#ececec" stroke-width="0.9" fill="none"/>
<path d="M657.95 149.75L657.95 528.3" stroke="#ececec" stroke-width="0.9" fill="none"/>
<path d="M697.8 149.75L697.8 528.3" stroke="#ececec" stroke-width="0.9" fill="none"/>
<path d="M737.65 149.75L737.65 528.3" stroke="#ececec" stroke-width="0.9" fill="none"/>
<path d="M777.5 149.75L777.5 528.3" stroke="#ececec" stroke-width="0.9" fill="none"/>
<path d="M817.35 149.75L817.35 528.3" stroke="#ececec" stroke-width="0.9" fill="none"/>
<path d="M857.2 149.75L857.2 528.3" stroke="#ececec" stroke-width="0.9" fill="none"/>
<path d="M897.05 149.75L897.05 528.3" stroke="#ececec" stroke-width="0.9" fill="none"/>
<path d="M936.9 149.75L936.9 528.3" stroke="#ececec" stroke-width="0.9" fill="none"/>
<path d="M96.6 163.55L932.4 163.55" stroke="#ececec" stroke-width="0.9" fill="none"/>
<path d="M96.6 177.35L932.4 177.35" stroke="#ececec" stroke-width="0.9" fill="none"/>
<path d="M96.6 191.15L932.4 191.15" stroke="#ececec" stroke-width="0.9" fill="none"/>
<path d="M96.6 204.95L932.4 204.95" stroke="#ececec" stroke-width="0.9" fill="none"/>
<path d="M96.6 218.75L932.4 218.75" stroke="#ececec" stroke-width="0.9" fill="none"/>
<path d="M96.6 232.55L932.4 232.55" stroke="#ececec" stroke-width="0.9" fill="none"/>
<path d="M96.6 246.35L932.4 246.35" stroke="#ececec" stroke-width="0.9" fill="none"/>
<path d="M96.6 260.15L932.4 260.15" stroke="#ececec" stroke-width="0.9" fill="none"/>
<path d="M96.6 273.95L932.4 273.95" stroke="#ececec" stroke-width="0.9" fill="none"/>
<path d="M96.6 287.75L932.4 287.75" stroke="#ececec" stroke-width="0.9" fill="none"/>
<path d="M96.6 301.55L932.4 301.55" stroke="#ececec" stroke-width="0.9" fill="none"/>
<path d="M96.6 315.35L932.4 315.35" stroke="#ececec" stroke-width="0.9" fill="none"/>
<path d="M96.6 329.15L932.4 329.15" stroke="#ececec" stroke-width="0.9" fill="none"/>
<path d="M96.6 342.95L932.4 342.95" stroke="#ececec" stroke-width="0.9" fill="none"/>
<path d="M96.6 356.75L932.4 356.75" stroke="#ececec" stroke-width="0.9" fill="none"/>
<path d="M96.6 370.55L932.4 370.55" stroke="#ececec" stroke-width="0.9" fill="none"/>
<path d="M96.6 384.35L932.4 384.35" stroke="#ececec" stroke-width="0.9" fill="none"/>
<path d="M96.6 398.15L932.4 398.15" stroke="#ececec" stroke-width="0.9" fill="none"/>
<path d="M96.6 411.95L932.4 411.95" stroke="#ececec" stroke-width="0.9" fill="none"/>
<path d="M96.6 425.75L932.4 425.75" stroke="#ececec" stroke-width="0.9" fill="none"/>
<path d="M96.6 439.55L932.4 439.55" stroke="#ececec" stroke-width="0.9" fill="none"/>
<path d="M96.6 453.35L932.4 453.35" stroke="#ececec" stroke-width="0.9" fill="none"/>
<path d="M96.6 467.15L932.4 467.15" stroke="#ececec" stroke-width="0.9" fill="none"/>
<path d="M96.6 480.95L932.4 480.95" stroke="#ececec" stroke-width="0.9" fill="none"/>
<path d="M96.6 494.75L932.4 494.75" stroke="#ececec" stroke-width="0.9" fill="none"/>
<path d="M96.6 508.55L932.4 508.55" stroke="#ececec" stroke-width="0.9" fill="none"/>
<path d="M96.6 522.35L932.4 522.35" stroke="#ececec" stroke-width="0.9" fill="none"/>
<path d="M96.6 536.15L932.4 536.15" stroke="#ececec" stroke-width="0.9" fill="none"/>
<rect x="339.15" y="136.8" width="39.85" height="13.4" fill="#d2d2d2"/>
<path d="M339.15 149.8L379 149.8" stroke="#217346" stroke-width="0.9" fill="none"/>
<rect x="80" y="149.75" width="16.6" height="13.8" fill="#d2d2d2"/>
<path d="M96.2 149.75L96.2 163.55" stroke="#217346" stroke-width="0.9" fill="none"/>
<path d="M96.6 137L96.6 150.2" stroke="#c4c4c4" stroke-width="0.8" fill="none"/>
<path d="M179.75 137L179.75 150.2" stroke="#c4c4c4" stroke-width="0.8" fill="none"/>
<path d="M219.6 137L219.6 150.2" stroke="#c4c4c4" stroke-width="0.8" fill="none"/>
<path d="M259.45 137L259.45 150.2" stroke="#c4c4c4" stroke-width="0.8" fill="none"/>
<path d="M299.3 137L299.3 150.2" stroke="#c4c4c4" stroke-width="0.8" fill="none"/>
<path d="M339.15 137L339.15 150.2" stroke="#c4c4c4" stroke-width="0.8" fill="none"/>
<path d="M379 137L379 150.2" stroke="#c4c4c4" stroke-width="0.8" fill="none"/>
<path d="M418.85 137L418.85 150.2" stroke="#c4c4c4" stroke-width="0.8" fill="none"/>
<path d="M458.7 137L458.7 150.2" stroke="#c4c4c4" stroke-width="0.8" fill="none"/>
<path d="M498.55 137L498.55 150.2" stroke="#c4c4c4" stroke-width="0.8" fill="none"/>
<path d="M538.4 137L538.4 150.2" stroke="#c4c4c4" stroke-width="0.8" fill="none"/>
<path d="M578.25 137L578.25 150.2" stroke="#c4c4c4" stroke-width="0.8" fill="none"/>
<path d="M618.1 137L618.1 150.2" stroke="#c4c4c4" stroke-width="0.8" fill="none"/>
<path d="M657.95 137L657.95 150.2" stroke="#c4c4c4" stroke-width="0.8" fill="none"/>
<path d="M697.8 137L697.8 150.2" stroke="#c4c4c4" stroke-width="0.8" fill="none"/>
<path d="M737.65 137L737.65 150.2" stroke="#c4c4c4" stroke-width="0.8" fill="none"/>
<path d="M777.5 137L777.5 150.2" stroke="#c4c4c4" stroke-width="0.8" fill="none"/>
<path d="M817.35 137L817.35 150.2" stroke="#c4c4c4" stroke-width="0.8" fill="none"/>
<path d="M857.2 137L857.2 150.2" stroke="#c4c4c4" stroke-width="0.8" fill="none"/>
<path d="M897.05 137L897.05 150.2" stroke="#c4c4c4" stroke-width="0.8" fill="none"/>
<path d="M936.9 137L936.9 150.2" stroke="#c4c4c4" stroke-width="0.8" fill="none"/>
<path d="M80 163.55L96.6 163.55" stroke="#cfcfcf" stroke-width="0.7" fill="none"/>
<path d="M80 177.35L96.6 177.35" stroke="#cfcfcf" stroke-width="0.7" fill="none"/>
<path d="M80 191.15L96.6 191.15" stroke="#cfcfcf" stroke-width="0.7" fill="none"/>
<path d="M80 204.95L96.6 204.95" stroke="#cfcfcf" stroke-width="0.7" fill="none"/>
<path d="M80 218.75L96.6 218.75" stroke="#cfcfcf" stroke-width="0.7" fill="none"/>
<path d="M80 232.55L96.6 232.55" stroke="#cfcfcf" stroke-width="0.7" fill="none"/>
<path d="M80 246.35L96.6 246.35" stroke="#cfcfcf" stroke-width="0.7" fill="none"/>
<path d="M80 260.15L96.6 260.15" stroke="#cfcfcf" stroke-width="0.7" fill="none"/>
<path d="M80 273.95L96.6 273.95" stroke="#cfcfcf" stroke-width="0.7" fill="none"/>
<path d="M80 287.75L96.6 287.75" stroke="#cfcfcf" stroke-width="0.7" fill="none"/>
<path d="M80 301.55L96.6 301.55" stroke="#cfcfcf" stroke-width="0.7" fill="none"/>
<path d="M80 315.35L96.6 315.35" stroke="#cfcfcf" stroke-width="0.7" fill="none"/>
<path d="M80 329.15L96.6 329.15" stroke="#cfcfcf" stroke-width="0.7" fill="none"/>
<path d="M80 342.95L96.6 342.95" stroke="#cfcfcf" stroke-width="0.7" fill="none"/>
<path d="M80 356.75L96.6 356.75" stroke="#cfcfcf" stroke-width="0.7" fill="none"/>
<path d="M80 370.55L96.6 370.55" stroke="#cfcfcf" stroke-width="0.7" fill="none"/>
<path d="M80 384.35L96.6 384.35" stroke="#cfcfcf" stroke-width="0.7" fill="none"/>
<path d="M80 398.15L96.6 398.15" stroke="#cfcfcf" stroke-width="0.7" fill="none"/>
<path d="M80 411.95L96.6 411.95" stroke="#cfcfcf" stroke-width="0.7" fill="none"/>
<path d="M80 425.75L96.6 425.75" stroke="#cfcfcf" stroke-width="0.7" fill="none"/>
<path d="M80 439.55L96.6 439.55" stroke="#cfcfcf" stroke-width="0.7" fill="none"/>
<path d="M80 453.35L96.6 453.35" stroke="#cfcfcf" stroke-width="0.7" fill="none"/>
<path d="M80 467.15L96.6 467.15" stroke="#cfcfcf" stroke-width="0.7" fill="none"/>
<path d="M80 480.95L96.6 480.95" stroke="#cfcfcf" stroke-width="0.7" fill="none"/>
<path d="M80 494.75L96.6 494.75" stroke="#cfcfcf" stroke-width="0.7" fill="none"/>
<path d="M80 508.55L96.6 508.55" stroke="#cfcfcf" stroke-width="0.7" fill="none"/>
<path d="M80 522.35L96.6 522.35" stroke="#cfcfcf" stroke-width="0.7" fill="none"/>
<path d="M80 536.15L96.6 536.15" stroke="#cfcfcf" stroke-width="0.7" fill="none"/>
<path d="M96.6 149.75L96.6 528.3" stroke="#c4c4c4" stroke-width="0.8" fill="none"/>
<path d="M80 149.75L932.4 149.75" stroke="#c4c4c4" stroke-width="0.8" fill="none"/>
<path d="M84.6 148.6L94.8 148.6L94.8 138.2Z" fill="#b4b4b4"/>
<rect x="96.6" y="191.15" width="83.15" height="27.6" fill="#d9e1f2"/>
<rect x="96.6" y="246.35" width="83.15" height="13.8" fill="#d9e1f2"/>
<rect x="96.6" y="273.95" width="162.85" height="13.8" fill="#fce4d6"/>
<path d="M96.6 177.35L179.75 177.35" stroke="#6a6a6a" stroke-width="0.8" fill="none"/>
<path d="M179.75 177.35L179.75 218.75" stroke="#8a8a8a" stroke-width="0.85" fill="none"/>
<path d="M96.6 191.15L458.7 191.15" stroke="#6a6a6a" stroke-width="0.8" fill="none"/>
<path d="M96.6 204.95L458.7 204.95" stroke="#6a6a6a" stroke-width="0.8" fill="none"/>
<path d="M96.6 218.75L458.7 218.75" stroke="#6a6a6a" stroke-width="0.8" fill="none"/>
<path d="M219.6 191.15L219.6 218.75" stroke="#8a8a8a" stroke-width="0.85" fill="none"/>
<path d="M259.45 191.15L259.45 218.75" stroke="#8a8a8a" stroke-width="0.85" fill="none"/>
<path d="M299.3 191.15L299.3 218.75" stroke="#8a8a8a" stroke-width="0.85" fill="none"/>
<path d="M339.15 191.15L339.15 218.75" stroke="#8a8a8a" stroke-width="0.85" fill="none"/>
<path d="M379 191.15L379 218.75" stroke="#8a8a8a" stroke-width="0.85" fill="none"/>
<path d="M418.85 191.15L418.85 218.75" stroke="#8a8a8a" stroke-width="0.85" fill="none"/>
<path d="M458.7 191.15L458.7 218.75" stroke="#8a8a8a" stroke-width="0.85" fill="none"/>
<path d="M96.6 232.55L179.75 232.55" stroke="#6a6a6a" stroke-width="0.8" fill="none"/>
<path d="M179.75 232.55L179.75 260.15" stroke="#8a8a8a" stroke-width="0.85" fill="none"/>
<path d="M96.6 246.35L458.7 246.35" stroke="#6a6a6a" stroke-width="0.8" fill="none"/>
<path d="M96.6 260.15L458.7 260.15" stroke="#6a6a6a" stroke-width="0.8" fill="none"/>
<path d="M219.6 246.35L219.6 260.15" stroke="#8a8a8a" stroke-width="0.85" fill="none"/>
<path d="M259.45 246.35L259.45 260.15" stroke="#8a8a8a" stroke-width="0.85" fill="none"/>
<path d="M299.3 246.35L299.3 260.15" stroke="#8a8a8a" stroke-width="0.85" fill="none"/>
<path d="M339.15 246.35L339.15 260.15" stroke="#8a8a8a" stroke-width="0.85" fill="none"/>
<path d="M379 246.35L379 260.15" stroke="#8a8a8a" stroke-width="0.85" fill="none"/>
<path d="M418.85 246.35L418.85 260.15" stroke="#8a8a8a" stroke-width="0.85" fill="none"/>
<path d="M458.7 246.35L458.7 260.15" stroke="#8a8a8a" stroke-width="0.85" fill="none"/>
<path d="M96.6 273.95L259.45 273.95" stroke="#6a6a6a" stroke-width="0.8" fill="none"/>
<path d="M96.6 287.75L259.45 287.75" stroke="#6a6a6a" stroke-width="0.8" fill="none"/>
<path d="M96.6 301.55L259.45 301.55" stroke="#6a6a6a" stroke-width="0.8" fill="none"/>
<path d="M96.6 315.35L259.45 315.35" stroke="#6a6a6a" stroke-width="0.8" fill="none"/>
<path d="M96.6 329.15L259.45 329.15" stroke="#6a6a6a" stroke-width="0.8" fill="none"/>
<path d="M96.6 342.95L259.45 342.95" stroke="#6a6a6a" stroke-width="0.8" fill="none"/>
<path d="M96.6 356.75L259.45 356.75" stroke="#6a6a6a" stroke-width="0.8" fill="none"/>
<path d="M96.6 370.55L259.45 370.55" stroke="#6a6a6a" stroke-width="0.8" fill="none"/>
<path d="M96.6 384.35L259.45 384.35" stroke="#6a6a6a" stroke-width="0.8" fill="none"/>
<path d="M96.6 398.15L259.45 398.15" stroke="#6a6a6a" stroke-width="0.8" fill="none"/>
<path d="M96.6 411.95L259.45 411.95" stroke="#6a6a6a" stroke-width="0.8" fill="none"/>
<path d="M179.75 273.95L179.75 411.95" stroke="#8a8a8a" stroke-width="0.85" fill="none"/>
<path d="M219.6 273.95L219.6 411.95" stroke="#8a8a8a" stroke-width="0.85" fill="none"/>
<path d="M259.45 273.95L259.45 411.95" stroke="#8a8a8a" stroke-width="0.85" fill="none"/>
<rect x="339.35" y="149.95" width="39.45" height="13.4" fill="none" stroke="#217346" stroke-width="1"/>
<rect x="377.3" y="161.85" width="2.6" height="2.6" fill="#fff"/>
<rect x="377.8" y="162.35" width="2" height="2" fill="#217346"/>
<rect x="171.45" y="184.3" width="296.35" height="42.9" fill="none" stroke="#fe0000" stroke-width="3.4"/>
</g>
<text x="135.44" y="145.93" font-size="9.1" fill="#4a4a4a" textLength="5.46" lengthAdjust="spacingAndGlyphs" transform="rotate(0.05 135.44 145.93)">A</text>
<text x="196.82" y="145.93" font-size="9.1" fill="#4a4a4a" textLength="5.46" lengthAdjust="spacingAndGlyphs" transform="rotate(0.05 196.82 145.93)">B</text>
<text x="236.52" y="145.93" font-size="9.1" fill="#4a4a4a" textLength="5.91" lengthAdjust="spacingAndGlyphs" transform="rotate(0.05 236.52 145.93)">C</text>
<text x="276.28" y="145.93" font-size="9.1" fill="#4a4a4a" textLength="5.91" lengthAdjust="spacingAndGlyphs" transform="rotate(0.05 276.28 145.93)">D</text>
<text x="316.33" y="145.93" font-size="9.1" fill="#4a4a4a" textLength="5.46" lengthAdjust="spacingAndGlyphs" transform="rotate(0.05 316.33 145.93)">E</text>
<text x="356.4" y="145.93" font-size="9.1" fill="#217346" textLength="5" lengthAdjust="spacingAndGlyphs" transform="rotate(0.05 356.4 145.93)">F</text>
<text x="395.84" y="145.93" font-size="9.1" fill="#4a4a4a" textLength="6.37" lengthAdjust="spacingAndGlyphs" transform="rotate(0.05 395.84 145.93)">G</text>
<text x="435.82" y="145.93" font-size="9.1" fill="#4a4a4a" textLength="5.91" lengthAdjust="spacingAndGlyphs" transform="rotate(0.05 435.82 145.93)">H</text>
<text x="477.49" y="145.93" font-size="9.1" fill="#4a4a4a" textLength="2.28" lengthAdjust="spacingAndGlyphs" transform="rotate(0.05 477.49 145.93)">I</text>
<text x="516.67" y="145.93" font-size="9.1" fill="#4a4a4a" textLength="4.09" lengthAdjust="spacingAndGlyphs" transform="rotate(0.05 516.67 145.93)">J</text>
<text x="555.3" y="145.93" font-size="9.1" fill="#4a4a4a" textLength="5.46" lengthAdjust="spacingAndGlyphs" transform="rotate(0.05 555.3 145.93)">K</text>
<text x="595.7" y="145.93" font-size="9.1" fill="#4a4a4a" textLength="4.55" lengthAdjust="spacingAndGlyphs" transform="rotate(0.05 595.7 145.93)">L</text>
<text x="634.61" y="145.93" font-size="9.1" fill="#4a4a4a" textLength="6.82" lengthAdjust="spacingAndGlyphs" transform="rotate(0.05 634.61 145.93)">M</text>
<text x="674.92" y="145.93" font-size="9.1" fill="#4a4a4a" textLength="5.91" lengthAdjust="spacingAndGlyphs" transform="rotate(0.05 674.92 145.93)">N</text>
<text x="714.54" y="145.93" font-size="9.1" fill="#4a4a4a" textLength="6.37" lengthAdjust="spacingAndGlyphs" transform="rotate(0.05 714.54 145.93)">O</text>
<text x="754.72" y="145.93" font-size="9.1" fill="#4a4a4a" textLength="5.46" lengthAdjust="spacingAndGlyphs" transform="rotate(0.05 754.72 145.93)">P</text>
<text x="794.24" y="145.93" font-size="9.1" fill="#4a4a4a" textLength="6.37" lengthAdjust="spacingAndGlyphs" transform="rotate(0.05 794.24 145.93)">Q</text>
<text x="834.17" y="145.93" font-size="9.1" fill="#4a4a4a" textLength="5.91" lengthAdjust="spacingAndGlyphs" transform="rotate(0.05 834.17 145.93)">R</text>
<text x="874.4" y="145.93" font-size="9.1" fill="#4a4a4a" textLength="5.46" lengthAdjust="spacingAndGlyphs" transform="rotate(0.05 874.4 145.93)">S</text>
<text x="914.48" y="145.93" font-size="9.1" fill="#4a4a4a" textLength="5" lengthAdjust="spacingAndGlyphs" transform="rotate(0.05 914.48 145.93)">T</text>
<g clip-path="url(#gc)">
<text x="85.7" y="160" font-size="9.6" fill="#217346" textLength="4.77" lengthAdjust="spacingAndGlyphs" transform="rotate(0.05 85.7 160)">1</text>
<text x="85.94" y="173.8" font-size="9.6" fill="#4a4a4a" textLength="4.52" lengthAdjust="spacingAndGlyphs" transform="rotate(0.05 85.94 173.8)">2</text>
<text x="86.05" y="187.6" font-size="9.6" fill="#4a4a4a" textLength="4.34" lengthAdjust="spacingAndGlyphs" transform="rotate(0.05 86.05 187.6)">3</text>
<text x="86.18" y="201.4" font-size="9.6" fill="#4a4a4a" textLength="4.08" lengthAdjust="spacingAndGlyphs" transform="rotate(0.05 86.18 201.4)">4</text>
<text x="86.04" y="215.2" font-size="9.6" fill="#4a4a4a" textLength="4.34" lengthAdjust="spacingAndGlyphs" transform="rotate(0.05 86.04 215.2)">5</text>
<text x="85.94" y="229" font-size="9.6" fill="#4a4a4a" textLength="4.46" lengthAdjust="spacingAndGlyphs" transform="rotate(0.05 85.94 229)">6</text>
<text x="85.93" y="242.8" font-size="9.6" fill="#4a4a4a" textLength="4.53" lengthAdjust="spacingAndGlyphs" transform="rotate(0.05 85.93 242.8)">7</text>
<text x="86.01" y="256.6" font-size="9.6" fill="#4a4a4a" textLength="4.39" lengthAdjust="spacingAndGlyphs" transform="rotate(0.05 86.01 256.6)">8</text>
<text x="85.97" y="270.4" font-size="9.6" fill="#4a4a4a" textLength="4.45" lengthAdjust="spacingAndGlyphs" transform="rotate(0.05 85.97 270.4)">9</text>
<text x="83.42" y="284.2" font-size="9.6" fill="#4a4a4a" textLength="9.26" lengthAdjust="spacingAndGlyphs" transform="rotate(0.05 83.42 284.2)">10</text>
<text x="83.41" y="298" font-size="9.6" fill="#4a4a4a" textLength="9.35" lengthAdjust="spacingAndGlyphs" transform="rotate(0.05 83.41 298)">11</text>
<text x="83.41" y="311.8" font-size="9.6" fill="#4a4a4a" textLength="9.36" lengthAdjust="spacingAndGlyphs" transform="rotate(0.05 83.41 311.8)">12</text>
<text x="83.41" y="325.6" font-size="9.6" fill="#4a4a4a" textLength="9.3" lengthAdjust="spacingAndGlyphs" transform="rotate(0.05 83.41 325.6)">13</text>
<text x="83.42" y="339.4" font-size="9.6" fill="#4a4a4a" textLength="9.17" lengthAdjust="spacingAndGlyphs" transform="rotate(0.05 83.42 339.4)">14</text>
<text x="83.41" y="353.2" font-size="9.6" fill="#4a4a4a" textLength="9.29" lengthAdjust="spacingAndGlyphs" transform="rotate(0.05 83.41 353.2)">15</text>
<text x="83.41" y="367" font-size="9.6" fill="#4a4a4a" textLength="9.3" lengthAdjust="spacingAndGlyphs" transform="rotate(0.05 83.41 367)">16</text>
<text x="83.41" y="380.8" font-size="9.6" fill="#4a4a4a" textLength="9.36" lengthAdjust="spacingAndGlyphs" transform="rotate(0.05 83.41 380.8)">17</text>
<text x="83.41" y="394.6" font-size="9.6" fill="#4a4a4a" textLength="9.3" lengthAdjust="spacingAndGlyphs" transform="rotate(0.05 83.41 394.6)">18</text>
<text x="83.41" y="408.4" font-size="9.6" fill="#4a4a4a" textLength="9.34" lengthAdjust="spacingAndGlyphs" transform="rotate(0.05 83.41 408.4)">19</text>
<text x="83.64" y="422.2" font-size="9.6" fill="#4a4a4a" textLength="9.03" lengthAdjust="spacingAndGlyphs" transform="rotate(0.05 83.64 422.2)">20</text>
<text x="83.64" y="436" font-size="9.6" fill="#4a4a4a" textLength="9.11" lengthAdjust="spacingAndGlyphs" transform="rotate(0.05 83.64 436)">21</text>
<text x="83.64" y="449.8" font-size="9.6" fill="#4a4a4a" textLength="9.13" lengthAdjust="spacingAndGlyphs" transform="rotate(0.05 83.64 449.8)">22</text>
<text x="83.64" y="463.6" font-size="9.6" fill="#4a4a4a" textLength="9.07" lengthAdjust="spacingAndGlyphs" transform="rotate(0.05 83.64 463.6)">23</text>
<text x="83.65" y="477.4" font-size="9.6" fill="#4a4a4a" textLength="8.94" lengthAdjust="spacingAndGlyphs" transform="rotate(0.05 83.65 477.4)">24</text>
<text x="83.64" y="491.2" font-size="9.6" fill="#4a4a4a" textLength="9.05" lengthAdjust="spacingAndGlyphs" transform="rotate(0.05 83.64 491.2)">25</text>
<text x="83.64" y="505" font-size="9.6" fill="#4a4a4a" textLength="9.07" lengthAdjust="spacingAndGlyphs" transform="rotate(0.05 83.64 505)">26</text>
<text x="83.64" y="518.8" font-size="9.6" fill="#4a4a4a" textLength="9.13" lengthAdjust="spacingAndGlyphs" transform="rotate(0.05 83.64 518.8)">27</text>
<text x="83.64" y="532.6" font-size="9.6" fill="#4a4a4a" textLength="9.06" lengthAdjust="spacingAndGlyphs" transform="rotate(0.05 83.64 532.6)">28</text>
</g>
<text x="97.94" y="159.61" font-size="8.3" fill="#3a3a3a" textLength="74.7" lengthAdjust="spacingAndGlyphs">ユニフォームサイズ</text>
<text x="96.77" y="187.21" font-size="8.3" fill="#3a3a3a" textLength="24.9" lengthAdjust="spacingAndGlyphs">リスト</text>
<text x="98.23" y="201.01" font-size="8.3" fill="#3a3a3a" textLength="16.6" lengthAdjust="spacingAndGlyphs">身長</text>
<text x="98.04" y="214.81" font-size="8.3" fill="#3a3a3a" textLength="24.9" lengthAdjust="spacingAndGlyphs">サイズ</text>
<text x="98.44" y="242.41" font-size="8.3" fill="#3a3a3a" textLength="41.5" lengthAdjust="spacingAndGlyphs">参考データ</text>
<text x="98.04" y="256.21" font-size="8.3" fill="#3a3a3a" textLength="49.8" lengthAdjust="spacingAndGlyphs">サイズ幅見方</text>
<text x="204.23" y="201.18" font-size="9.1" fill="#3a3a3a" textLength="13.79" lengthAdjust="spacingAndGlyphs" transform="rotate(0.05 204.23 201.18)">150</text>
<text x="181.76" y="214.98" font-size="9.1" fill="#3a3a3a" textLength="11.2" lengthAdjust="spacingAndGlyphs" transform="rotate(0.05 181.76 214.98)">XS</text>
<text x="181.52" y="256.38" font-size="9.1" fill="#3a3a3a" textLength="13.75" lengthAdjust="spacingAndGlyphs" transform="rotate(0.05 181.52 256.38)">150</text>
<path d="M195.65 254.25C196.55 251.95 197.65 252.35 198.45 253.45S200.25 255.05 201.15 252.65" fill="none" stroke="#3a3a3a" stroke-width="0.8"/>
<text x="201.32" y="256.38" font-size="9.1" fill="#3a3a3a" textLength="13.82" lengthAdjust="spacingAndGlyphs" transform="rotate(0.05 201.32 256.38)">159</text>
<text x="244.08" y="201.18" font-size="9.1" fill="#3a3a3a" textLength="13.79" lengthAdjust="spacingAndGlyphs" transform="rotate(0.05 244.08 201.18)">160</text>
<text x="221.42" y="214.98" font-size="9.1" fill="#3a3a3a" textLength="5.6" lengthAdjust="spacingAndGlyphs" transform="rotate(0.05 221.42 214.98)">S</text>
<text x="221.37" y="256.38" font-size="9.1" fill="#3a3a3a" textLength="13.75" lengthAdjust="spacingAndGlyphs" transform="rotate(0.05 221.37 256.38)">160</text>
<path d="M235.5 254.25C236.4 251.95 237.5 252.35 238.3 253.45S240.1 255.05 241 252.65" fill="none" stroke="#3a3a3a" stroke-width="0.8"/>
<text x="241.18" y="256.38" font-size="9.1" fill="#3a3a3a" textLength="13.66" lengthAdjust="spacingAndGlyphs" transform="rotate(0.05 241.18 256.38)">164</text>
<text x="283.96" y="201.18" font-size="9.1" fill="#3a3a3a" textLength="13.79" lengthAdjust="spacingAndGlyphs" transform="rotate(0.05 283.96 201.18)">165</text>
<text x="260.96" y="214.98" font-size="9.1" fill="#3a3a3a" textLength="12.59" lengthAdjust="spacingAndGlyphs" transform="rotate(0.05 260.96 214.98)">MS</text>
<text x="261.22" y="256.38" font-size="9.1" fill="#3a3a3a" textLength="13.78" lengthAdjust="spacingAndGlyphs" transform="rotate(0.05 261.22 256.38)">165</text>
<path d="M275.35 254.25C276.25 251.95 277.35 252.35 278.15 253.45S279.95 255.05 280.85 252.65" fill="none" stroke="#3a3a3a" stroke-width="0.8"/>
<text x="281.02" y="256.38" font-size="9.1" fill="#3a3a3a" textLength="13.82" lengthAdjust="spacingAndGlyphs" transform="rotate(0.05 281.02 256.38)">169</text>
<text x="323.78" y="201.18" font-size="9.1" fill="#3a3a3a" textLength="13.79" lengthAdjust="spacingAndGlyphs" transform="rotate(0.05 323.78 201.18)">170</text>
<text x="300.81" y="214.98" font-size="9.1" fill="#3a3a3a" textLength="6.99" lengthAdjust="spacingAndGlyphs" transform="rotate(0.05 300.81 214.98)">M</text>
<text x="301.07" y="256.38" font-size="9.1" fill="#3a3a3a" textLength="13.75" lengthAdjust="spacingAndGlyphs" transform="rotate(0.05 301.07 256.38)">170</text>
<path d="M315.2 254.25C316.1 251.95 317.2 252.35 318 253.45S319.8 255.05 320.7 252.65" fill="none" stroke="#3a3a3a" stroke-width="0.8"/>
<text x="320.88" y="256.38" font-size="9.1" fill="#3a3a3a" textLength="13.66" lengthAdjust="spacingAndGlyphs" transform="rotate(0.05 320.88 256.38)">174</text>
<text x="363.66" y="201.18" font-size="9.1" fill="#3a3a3a" textLength="13.79" lengthAdjust="spacingAndGlyphs" transform="rotate(0.05 363.66 201.18)">175</text>
<text x="340.66" y="214.98" font-size="9.1" fill="#3a3a3a" textLength="11.66" lengthAdjust="spacingAndGlyphs" transform="rotate(0.05 340.66 214.98)">ML</text>
<text x="340.92" y="256.38" font-size="9.1" fill="#3a3a3a" textLength="13.78" lengthAdjust="spacingAndGlyphs" transform="rotate(0.05 340.92 256.38)">175</text>
<path d="M355.05 254.25C355.95 251.95 357.05 252.35 357.85 253.45S359.65 255.05 360.55 252.65" fill="none" stroke="#3a3a3a" stroke-width="0.8"/>
<text x="360.72" y="256.38" font-size="9.1" fill="#3a3a3a" textLength="13.82" lengthAdjust="spacingAndGlyphs" transform="rotate(0.05 360.72 256.38)">179</text>
<text x="403.48" y="201.18" font-size="9.1" fill="#3a3a3a" textLength="13.79" lengthAdjust="spacingAndGlyphs" transform="rotate(0.05 403.48 201.18)">180</text>
<text x="380.51" y="214.98" font-size="9.1" fill="#3a3a3a" textLength="4.67" lengthAdjust="spacingAndGlyphs" transform="rotate(0.05 380.51 214.98)">L</text>
<text x="380.77" y="256.38" font-size="9.1" fill="#3a3a3a" textLength="13.75" lengthAdjust="spacingAndGlyphs" transform="rotate(0.05 380.77 256.38)">180</text>
<path d="M394.9 254.25C395.8 251.95 396.9 252.35 397.7 253.45S399.5 255.05 400.4 252.65" fill="none" stroke="#3a3a3a" stroke-width="0.8"/>
<text x="400.58" y="256.38" font-size="9.1" fill="#3a3a3a" textLength="13.66" lengthAdjust="spacingAndGlyphs" transform="rotate(0.05 400.58 256.38)">184</text>
<text x="443.36" y="201.18" font-size="9.1" fill="#3a3a3a" textLength="13.79" lengthAdjust="spacingAndGlyphs" transform="rotate(0.05 443.36 201.18)">185</text>
<text x="420.86" y="214.98" font-size="9.1" fill="#3a3a3a" textLength="10.27" lengthAdjust="spacingAndGlyphs" transform="rotate(0.05 420.86 214.98)">XL</text>
<text x="420.62" y="256.38" font-size="9.1" fill="#3a3a3a" textLength="13.78" lengthAdjust="spacingAndGlyphs" transform="rotate(0.05 420.62 256.38)">185</text>
<path d="M434.75 254.25C435.65 251.95 436.75 252.35 437.55 253.45S439.35 255.05 440.25 252.65" fill="none" stroke="#3a3a3a" stroke-width="0.8"/>
<text x="98.14" y="283.81" font-size="8.3" fill="#3a3a3a" textLength="16.6" lengthAdjust="spacingAndGlyphs">氏名</text>
<text x="181.38" y="283.81" font-size="8.3" fill="#3a3a3a" textLength="16.6" lengthAdjust="spacingAndGlyphs">身長</text>
<text x="221.04" y="283.81" font-size="8.3" fill="#3a3a3a" textLength="24.9" lengthAdjust="spacingAndGlyphs">サイズ</text>
<text x="98.28" y="297.61" font-size="8.3" fill="#3a3a3a" textLength="33.2" lengthAdjust="spacingAndGlyphs">浅田一郎</text>
<text x="204.27" y="297.78" font-size="9.1" fill="#3a3a3a" textLength="13.79" lengthAdjust="spacingAndGlyphs" transform="rotate(0.05 204.27 297.78)">173</text>
<text x="98.31" y="311.41" font-size="8.3" fill="#3a3a3a" textLength="33.2" lengthAdjust="spacingAndGlyphs">今村健吾</text>
<text x="204.27" y="311.58" font-size="9.1" fill="#3a3a3a" textLength="13.79" lengthAdjust="spacingAndGlyphs" transform="rotate(0.05 204.27 311.58)">188</text>
<text x="98.27" y="325.21" font-size="8.3" fill="#3a3a3a" textLength="33.2" lengthAdjust="spacingAndGlyphs">池波新太</text>
<text x="204.23" y="325.38" font-size="9.1" fill="#3a3a3a" textLength="13.79" lengthAdjust="spacingAndGlyphs" transform="rotate(0.05 204.23 325.38)">170</text>
<text x="98.18" y="339.01" font-size="8.3" fill="#3a3a3a" textLength="33.2" lengthAdjust="spacingAndGlyphs">上田葵斗</text>
<text x="204.15" y="339.18" font-size="9.1" fill="#3a3a3a" textLength="13.79" lengthAdjust="spacingAndGlyphs" transform="rotate(0.05 204.15 339.18)">184</text>
<text x="98.32" y="352.81" font-size="8.3" fill="#3a3a3a" textLength="33.2" lengthAdjust="spacingAndGlyphs">垣根良輔</text>
<text x="204.27" y="352.98" font-size="9.1" fill="#3a3a3a" textLength="13.79" lengthAdjust="spacingAndGlyphs" transform="rotate(0.05 204.27 352.98)">163</text>
<text x="98.43" y="366.61" font-size="8.3" fill="#3a3a3a" textLength="33.2" lengthAdjust="spacingAndGlyphs">佐伯康二</text>
<text x="204.27" y="366.78" font-size="9.1" fill="#3a3a3a" textLength="13.79" lengthAdjust="spacingAndGlyphs" transform="rotate(0.05 204.27 366.78)">166</text>
<text x="98.06" y="380.41" font-size="8.3" fill="#3a3a3a" textLength="24.9" lengthAdjust="spacingAndGlyphs">高田陸</text>
<text x="204.3" y="380.58" font-size="9.1" fill="#3a3a3a" textLength="13.79" lengthAdjust="spacingAndGlyphs" transform="rotate(0.05 204.3 380.58)">159</text>
<text x="98.34" y="394.21" font-size="8.3" fill="#3a3a3a" textLength="24.9" lengthAdjust="spacingAndGlyphs">葉室凛</text>
<text x="204.23" y="394.38" font-size="9.1" fill="#3a3a3a" textLength="13.79" lengthAdjust="spacingAndGlyphs" transform="rotate(0.05 204.23 394.38)">170</text>
<text x="97.92" y="408.01" font-size="8.3" fill="#3a3a3a" textLength="33.2" lengthAdjust="spacingAndGlyphs">宮部みき</text>
<text x="204.23" y="408.18" font-size="9.1" fill="#3a3a3a" textLength="13.79" lengthAdjust="spacingAndGlyphs" transform="rotate(0.05 204.23 408.18)">150</text>
<circle cx="374" cy="401.3" r="7.1" fill="#f08a80"/>
<path d="M372.6 397.6H375.4V399.9H377.7V402.7H375.4V405H372.6V402.7H370.3V399.9H372.6Z" fill="#fff" stroke="#222" stroke-width="0.7"/>
<rect x="933.4" y="136.4" width="9.2" height="10" fill="#fff" stroke="#ababab" stroke-width="0.7"/>
<path d="M936.4 142.4L939.6 142.4L938 140.6Z" fill="#555"/>
<rect x="933.4" y="146.4" width="9.2" height="358.5" fill="#fff" stroke="#ababab" stroke-width="0.7"/>
<rect x="933.4" y="504.9" width="9.2" height="14.6" fill="#dcdcdc"/>
<rect x="933.4" y="519.5" width="9.2" height="9.5" fill="#fff" stroke="#ababab" stroke-width="0.7"/>
<path d="M936.4 523.4L939.6 523.4L938 525.2Z" fill="#555"/>
<rect x="80" y="528.3" width="864" height="12.2" fill="#e6e6e6"/>
<path d="M80 528.3L932.4 528.3" stroke="#c2c2c2" stroke-width="0.8" fill="none"/>
<path d="M92.9 532.6L91.3 534.3L92.9 536" fill="none" stroke="#bdbdbd" stroke-width="0.8"/>
<path d="M103 532.6L104.6 534.3L103 536" fill="none" stroke="#bdbdbd" stroke-width="0.8"/>
<path d="M121.9 530.2L121.9 539.2" stroke="#c6c6c6" stroke-width="0.8" fill="none"/>
<text x="126.93" y="536.42" font-size="8.2" fill="#444" textLength="25.97" lengthAdjust="spacingAndGlyphs" transform="rotate(0.05 126.93 536.42)">Sheet1</text>
<rect x="159.4" y="528.3" width="37.1" height="10.4" fill="#fff"/>
<rect x="159.4" y="538.6" width="37.1" height="1.2" fill="#217346"/>
<text x="164.72" y="536.42" font-size="8.2" fill="#217346" textLength="26.71" lengthAdjust="spacingAndGlyphs" transform="rotate(0.05 164.72 536.42)">Sheet2</text>
<circle cx="214.5" cy="534.5" r="3.7" fill="none" stroke="#767676" stroke-width="0.7"/>
<path d="M212.5 534.5H216.5M214.5 532.5V536.5" fill="none" stroke="#767676" stroke-width="0.7"/>
<circle cx="596.6" cy="531.9" r="0.45" fill="#a0a0a0"/>
<circle cx="596.6" cy="534.5" r="0.45" fill="#a0a0a0"/>
<circle cx="596.6" cy="537.1" r="0.45" fill="#a0a0a0"/>
<rect x="603.5" y="529.8" width="9.6" height="8.9" fill="#fff" stroke="#ababab" stroke-width="0.7"/>
<path d="M609 532.8L609 535.8L607 534.3Z" fill="#555"/>
<rect x="613.1" y="529.8" width="293.5" height="8.9" fill="#fff"/>
<path d="M613.1 529.8L906.6 529.8" stroke="#c0c0c0" stroke-width="0.8" fill="none"/>
<path d="M613.1 538.7L906.6 538.7" stroke="#c0c0c0" stroke-width="0.8" fill="none"/>
<path d="M906.6 529.8L906.6 538.7" stroke="#c0c0c0" stroke-width="0.7" fill="none"/>
<rect x="906.6" y="529.8" width="16.6" height="8.9" fill="#d6d6d6"/>
<rect x="923.2" y="529.8" width="9.1" height="8.9" fill="#fff" stroke="#ababab" stroke-width="0.7"/>
<path d="M927 532.8L927 535.8L929 534.3Z" fill="#555"/>
<rect x="80" y="540.5" width="864" height="12.3" fill="#f3f3f3"/>
<path d="M80 540.5L944 540.5" stroke="#dedede" stroke-width="0.7" fill="none"/>
<text x="84.22" y="549.73" font-size="7" fill="#444" textLength="27.64" lengthAdjust="spacingAndGlyphs">準備完了</text>
<rect x="721.4" y="543.4" width="6.2" height="4.4" fill="#555"/>
<path d="M723.2 549.4L726 549.4" stroke="#555" stroke-width="0.8" fill="none"/>
<path d="M724.5 547.8L724.5 549.4" stroke="#555" stroke-width="0.8" fill="none"/>
<circle cx="727.4" cy="549.2" r="1.7" fill="#555"/>
<circle cx="727.4" cy="549.2" r="0.6" fill="#f3f3f3"/>
<text x="731.21" y="549.73" font-size="7" fill="#444" textLength="27.07" lengthAdjust="spacingAndGlyphs">表示設定</text>
<rect x="769.3" y="540.8" width="22.5" height="12" fill="#c8c8c8"/>
<rect x="776.6" y="543.6" width="6.8" height="6.8" fill="#fff" stroke="#666" stroke-width="0.55"/>
<path d="M778.87 543.6L778.87 550.4" stroke="#666" stroke-width="0.5" fill="none"/>
<path d="M781.13 543.6L781.13 550.4" stroke="#666" stroke-width="0.5" fill="none"/>
<path d="M776.6 545.87L783.4 545.87" stroke="#666" stroke-width="0.5" fill="none"/>
<path d="M776.6 548.13L783.4 548.13" stroke="#666" stroke-width="0.5" fill="none"/>
<rect x="799.6" y="543.6" width="6.8" height="6.8" fill="none" stroke="#777" stroke-width="0.6"/>
<rect x="801.4" y="545" width="3.2" height="5.4" fill="none" stroke="#777" stroke-width="0.5"/>
<rect x="822.8" y="543.6" width="6.8" height="6.8" fill="none" stroke="#777" stroke-width="0.6"/>
<path d="M824.8 543.6V547H827.8V543.6" fill="none" stroke="#777" stroke-width="0.5"/>
<path d="M841 547.2L844 547.2" stroke="#666" stroke-width="0.7" fill="none"/>
<path d="M848.8 547.2L905 547.2" stroke="#8a8a8a" stroke-width="0.8" fill="none"/>
<rect x="876" y="543.6" width="1.6" height="7" fill="#555"/>
<path d="M908.6 547.2H912.4M910.5 545.3V549.1" fill="none" stroke="#666" stroke-width="0.7"/>
<text x="920.11" y="549.75" font-size="7.4" fill="#444" textLength="19.87" lengthAdjust="spacingAndGlyphs" transform="rotate(0.05 920.11 549.75)">100%</text>
<defs><linearGradient id="tb" gradientUnits="userSpaceOnUse" x1="80" y1="0" x2="944" y2="0"><stop offset="0" stop-color="#1e3843"/><stop offset="0.32" stop-color="#1e3744"/><stop offset="0.7" stop-color="#1b2e3f"/><stop offset="1" stop-color="#182643"/></linearGradient></defs>
<rect x="80" y="552.8" width="864" height="23.2" fill="url(#tb)"/>
<rect x="89" y="560" width="4.5" height="4.1" fill="#fff"/>
<rect x="94.2" y="560" width="4.6" height="4.1" fill="#fff"/>
<rect x="89" y="564.8" width="4.5" height="4.1" fill="#fff"/>
<rect x="94.2" y="564.8" width="4.6" height="4.1" fill="#fff"/>
<path d="M88.6 559.6L99.2 559.6L99.2 558.2Z" fill="#1e3843"/>
<rect x="107.8" y="552.8" width="197.2" height="23.2" fill="#f2f2f2"/>
<path d="M107.8 553.1L305 553.1" stroke="#d0d0d0" stroke-width="0.6" fill="none"/>
<circle cx="120.6" cy="563.2" r="2.7" fill="none" stroke="#333" stroke-width="0.9"/>
<path d="M118.6 565.2L114.8 569" fill="none" stroke="#333" stroke-width="0.9"/>
<text x="129.63" y="568.1" font-size="8" fill="#444" textLength="67.07" lengthAdjust="spacingAndGlyphs">ここに入力して検索</text>
<circle cx="318.9" cy="564.4" r="4" fill="none" stroke="#ececec" stroke-width="1.1"/>
<rect x="343.4" y="561.4" width="5.4" height="6" fill="none" stroke="#d8d8d8" stroke-width="0.8"/>
<path d="M341.4 560.2V568.6M350.9 560.2V563M350.9 565.4V568.6M343.4 560.2V561.4M348.8 560.2V561.4M343.4 567.4V568.6M348.8 567.4V568.6" fill="none" stroke="#d8d8d8" stroke-width="0.8"/>
<path d="M368.6 560.2C368.6 559.6 369 559.2 369.6 559.2H373L374.2 560.6H380.2C380.8 560.6 381.2 561 381.2 561.6V569.4H368.6Z" fill="#f7c948"/>
<rect x="368.6" y="562.2" width="12.6" height="7.4" fill="#fcd968"/>
<rect x="371.2" y="566" width="7.4" height="3.6" fill="#3a8fd8"/>
<rect x="372.6" y="567.4" width="4.6" height="2.2" fill="#fcd968"/>
<rect x="394.8" y="558.2" width="12.2" height="12.4" fill="#1473c9"/>
<path d="M394.8 570.6L394.8 566L399.4 562L405.4 570.6Z" fill="#0b3f86"/>
<path d="M400.6 570.6L404.4 566.2L407 568.6L407 570.6Z" fill="#2d5fb8"/>
<circle cx="403.8" cy="561.4" r="1.1" fill="#dff1ff"/>
<path d="M424.2 559.8V558.6C424.2 557.6 429.6 557.6 429.6 558.6V559.8" fill="none" stroke="#39a7e0" stroke-width="1"/>
<rect x="420.2" y="559.6" width="13.6" height="11.8" fill="#f4f4f4" rx="1"/>
<rect x="424.2" y="562.6" width="2.4" height="2.4" fill="#f25022"/>
<rect x="427.2" y="562.6" width="2.4" height="2.4" fill="#7fba00"/>
<rect x="424.2" y="565.6" width="2.4" height="2.4" fill="#00a4ef"/>
<rect x="427.2" y="565.6" width="2.4" height="2.4" fill="#ffb900"/>
<defs><linearGradient id="eg" x1="0" y1="0" x2="1" y2="1"><stop offset="0" stop-color="#35c1f1"/><stop offset="0.5" stop-color="#2aa4e0"/><stop offset="1" stop-color="#0f5fb8"/></linearGradient><linearGradient id="eg2" x1="0" y1="0" x2="1" y2="0"><stop offset="0" stop-color="#1b9de2"/><stop offset="1" stop-color="#4cd36b"/></linearGradient></defs>
<circle cx="452.9" cy="564.5" r="7" fill="url(#eg)"/>
<path d="M446.4 562C447.6 558.6 450.4 557.5 452.9 557.5C457 557.5 459.9 560.4 459.9 563.8C459.9 566 458.2 567.4 456.2 567.4C454.4 567.4 453.6 566.4 454 565.6C454.6 564.6 454 562.4 451.4 562.2C449 562 447 563.4 446.4 565.2Z" fill="url(#eg2)"/>
<circle cx="448.6" cy="568.4" r="2.9" fill="#8a8f94"/>
<circle cx="448.6" cy="567.6" r="1" fill="#e4e4e4"/>
<path d="M446.8 570.2C446.8 568.6 450.4 568.6 450.4 570.2Z" fill="#e4e4e4"/>
<path d="M476.6 559L485 560.2L481.6 570L472.8 568.4Z" fill="#a9dcf0"/>
<path d="M476.6 559L485 560.2L484.4 562L476 560.8Z" fill="#3f8fb5"/>
<path d="M485 560.2L485.6 560.6L482.4 570.2L481.6 570Z" fill="#c8b28a"/>
<path d="M472.8 568.4L481.6 570L481.4 570.8L472.6 569.2Z" fill="#5aa4c4"/>
<circle cx="504.8" cy="564.4" r="6.5" fill="#fdee0a"/>
<path d="M530.6 558.8L532.2 562.4L536.4 562.8L533.2 565.4L534.2 569.6L530.6 567.4L527 569.6L528 565.4L524.8 562.8L529 562.4Z" fill="#4c78c8"/>
<path d="M530.6 560.6L531.6 563.2L534 563.4L532.2 565L532.8 567.6L530.6 566.2L528.4 567.6L529 565L527.2 563.4L529.6 563.2Z" fill="#cfe0ff"/>
<path d="M531.6 562.6V570L533.4 568.4L534.8 571.2L536 570.6L534.6 567.9H537Z" fill="#fff" stroke="#333" stroke-width="0.4"/>
<path d="M549 563L556.2 557.6L563.5 563L563.5 571L549 571Z" fill="#1a82d8"/>
<path d="M549.8 563.2L562.7 563.2L556.2 568.2Z" fill="#f4f8fc"/>
<path d="M549 571L556.2 566.2L563.5 571Z" fill="#3aa0ee"/>
<rect x="576" y="557.6" width="12.8" height="13.8" fill="#14305a" rx="2"/>
<path d="M580.4 565.4L584.6 561.2" fill="none" stroke="#38c6c0" stroke-width="1.8"/>
<circle cx="582" cy="560.4" r="1.1" fill="#7fe0d8"/>
<path d="M578 567.8H586.8C586.8 569.8 585.4 570.4 582.4 570.4S578 569.8 578 567.8Z" fill="#fff"/>
<rect x="580.8" y="568.6" width="3.2" height="0.8" fill="#14305a"/>
<rect x="595.6" y="552.8" width="24.4" height="23.2" fill="#3c5160"/>
<rect x="604.4" y="558.2" width="10" height="12.4" fill="#21a366" rx="0.8"/>
<rect x="604.4" y="561.3" width="10" height="3.1" fill="#107c41"/>
<rect x="604.4" y="564.4" width="10" height="3.1" fill="#185c37"/>
<rect x="609.4" y="558.2" width="5" height="3.1" fill="#33c481"/>
<rect x="600" y="560.6" width="7.6" height="7.6" fill="#107c41" rx="0.6"/>
<path d="M602.4 562.4L605.2 566.4M605.2 562.4L602.4 566.4" fill="none" stroke="#fff" stroke-width="0.9"/>
<rect x="626.6" y="559" width="9.8" height="8" fill="#2aa9c9" rx="1.6"/>
<path d="M636.4 561.6L640.2 559.6L640.2 566.4L636.4 564.4Z" fill="#2aa9c9"/>
<circle cx="631.5" cy="563" r="2.5" fill="#fff"/>
<circle cx="631.5" cy="563" r="1.7" fill="#ee3b3b"/>
<path d="M631.5 567V569.4M628.6 569.8H634.4" fill="none" stroke="#2aa9c9" stroke-width="0.8"/>
<rect x="495" y="574.7" width="20.6" height="1.3" fill="#9fd3f5"/>
<rect x="571.9" y="574.7" width="20.6" height="1.3" fill="#9fd3f5"/>
<rect x="595.6" y="574.7" width="24.4" height="1.3" fill="#9fd3f5"/>
<rect x="623" y="574.7" width="20.8" height="1.3" fill="#9fd3f5"/>
<defs><linearGradient id="sun" x1="0.15" y1="0.15" x2="0.85" y2="0.85"><stop offset="0" stop-color="#ffe367"/><stop offset="0.55" stop-color="#ffc02a"/><stop offset="1" stop-color="#ff9d0a"/></linearGradient></defs>
<circle cx="668.4" cy="564.6" r="5.6" fill="url(#sun)"/>
<text x="680.25" y="568.49" font-size="8.4" fill="#eef1f4" textLength="16.23" lengthAdjust="spacingAndGlyphs" stroke="#eef1f4" stroke-width="0.15" transform="rotate(0.05 680.25 568.49)">10°C</text>
<path d="M728 568.6L733 562.4L736 563.4L731 569.6Z" fill="none" stroke="#c8c8c8" stroke-width="0.7"/>
<rect x="767" y="562.2" width="7.6" height="4.4" fill="#f2f2f2" rx="0.6"/>
<path d="M783.4 566.8L788.4 562.4L790.4 564.6L785.4 569Z" fill="#e84040"/>
<rect x="804.6" y="560.6" width="3.6" height="8" fill="none" stroke="#d8d8d8" stroke-width="0.7"/>
<rect x="800.4" y="563" width="4.2" height="5.6" fill="none" stroke="#d8d8d8" stroke-width="0.7"/>
<path d="M823.6 567.4L828.8 561.2M826 568.4A1.6 1.6 0 0 1 823.2 566.2M827 560.6A1.6 1.6 0 0 1 829.6 562.8" fill="none" stroke="#e0e0e0" stroke-width="0.9"/>
<text x="839.13" y="567.87" font-size="9.4" fill="#fff" textLength="5.53" lengthAdjust="spacingAndGlyphs" style="font-family:'Liberation Serif',serif" transform="rotate(0.05 839.13 567.87)">A</text>
<circle cx="858.2" cy="563.8" r="4.5" fill="#1f78e0"/>
<circle cx="861.4" cy="566.4" r="1.6" fill="#e84a3a"/>
<circle cx="862.2" cy="567.4" r="1" fill="#ffd23a"/>
<text x="883.3" y="561.78" font-size="7.8" fill="#eef1f4" textLength="16.53" lengthAdjust="spacingAndGlyphs" stroke="#eef1f4" stroke-width="0.12" transform="rotate(0.05 883.3 561.78)">15:41</text>
<text x="873.54" y="573.28" font-size="7.8" fill="#eef1f4" textLength="35.97" lengthAdjust="spacingAndGlyphs" stroke="#eef1f4" stroke-width="0.12" transform="rotate(0.05 873.54 573.28)">2022/02/18</text>
<path d="M920.2 560.4H929.4V566.6H925.6L923.6 568.6V566.6H920.2Z" fill="#f4f4f4"/>
<path d="M921.8 562.4L927.8 562.4" stroke="#1a2844" stroke-width="0.6" fill="none"/>
<path d="M921.8 564.4L926.4 564.4" stroke="#1a2844" stroke-width="0.6" fill="none"/>
<path d="M941.5 552.8L941.5 576" stroke="#5a6a88" stroke-width="0.7" fill="none"/>
<text x="704.29" y="569.42" font-size="21" fill="rgba(235,238,240,0.62)" textLength="15.03" lengthAdjust="spacingAndGlyphs" transform="rotate(0.05 704.29 569.42)">©</text>
<text x="724.21" y="569.39" font-size="21.2" fill="rgba(235,238,240,0.62)" textLength="43.67" lengthAdjust="spacingAndGlyphs" transform="rotate(0.05 724.21 569.39)">2022</text>
<text x="772.74" y="569.39" font-size="21.2" fill="rgba(235,238,240,0.62)" textLength="48.3" lengthAdjust="spacingAndGlyphs" transform="rotate(0.05 772.74 569.39)">saym</text>
</svg>
</div></div></div>
</body></html>
